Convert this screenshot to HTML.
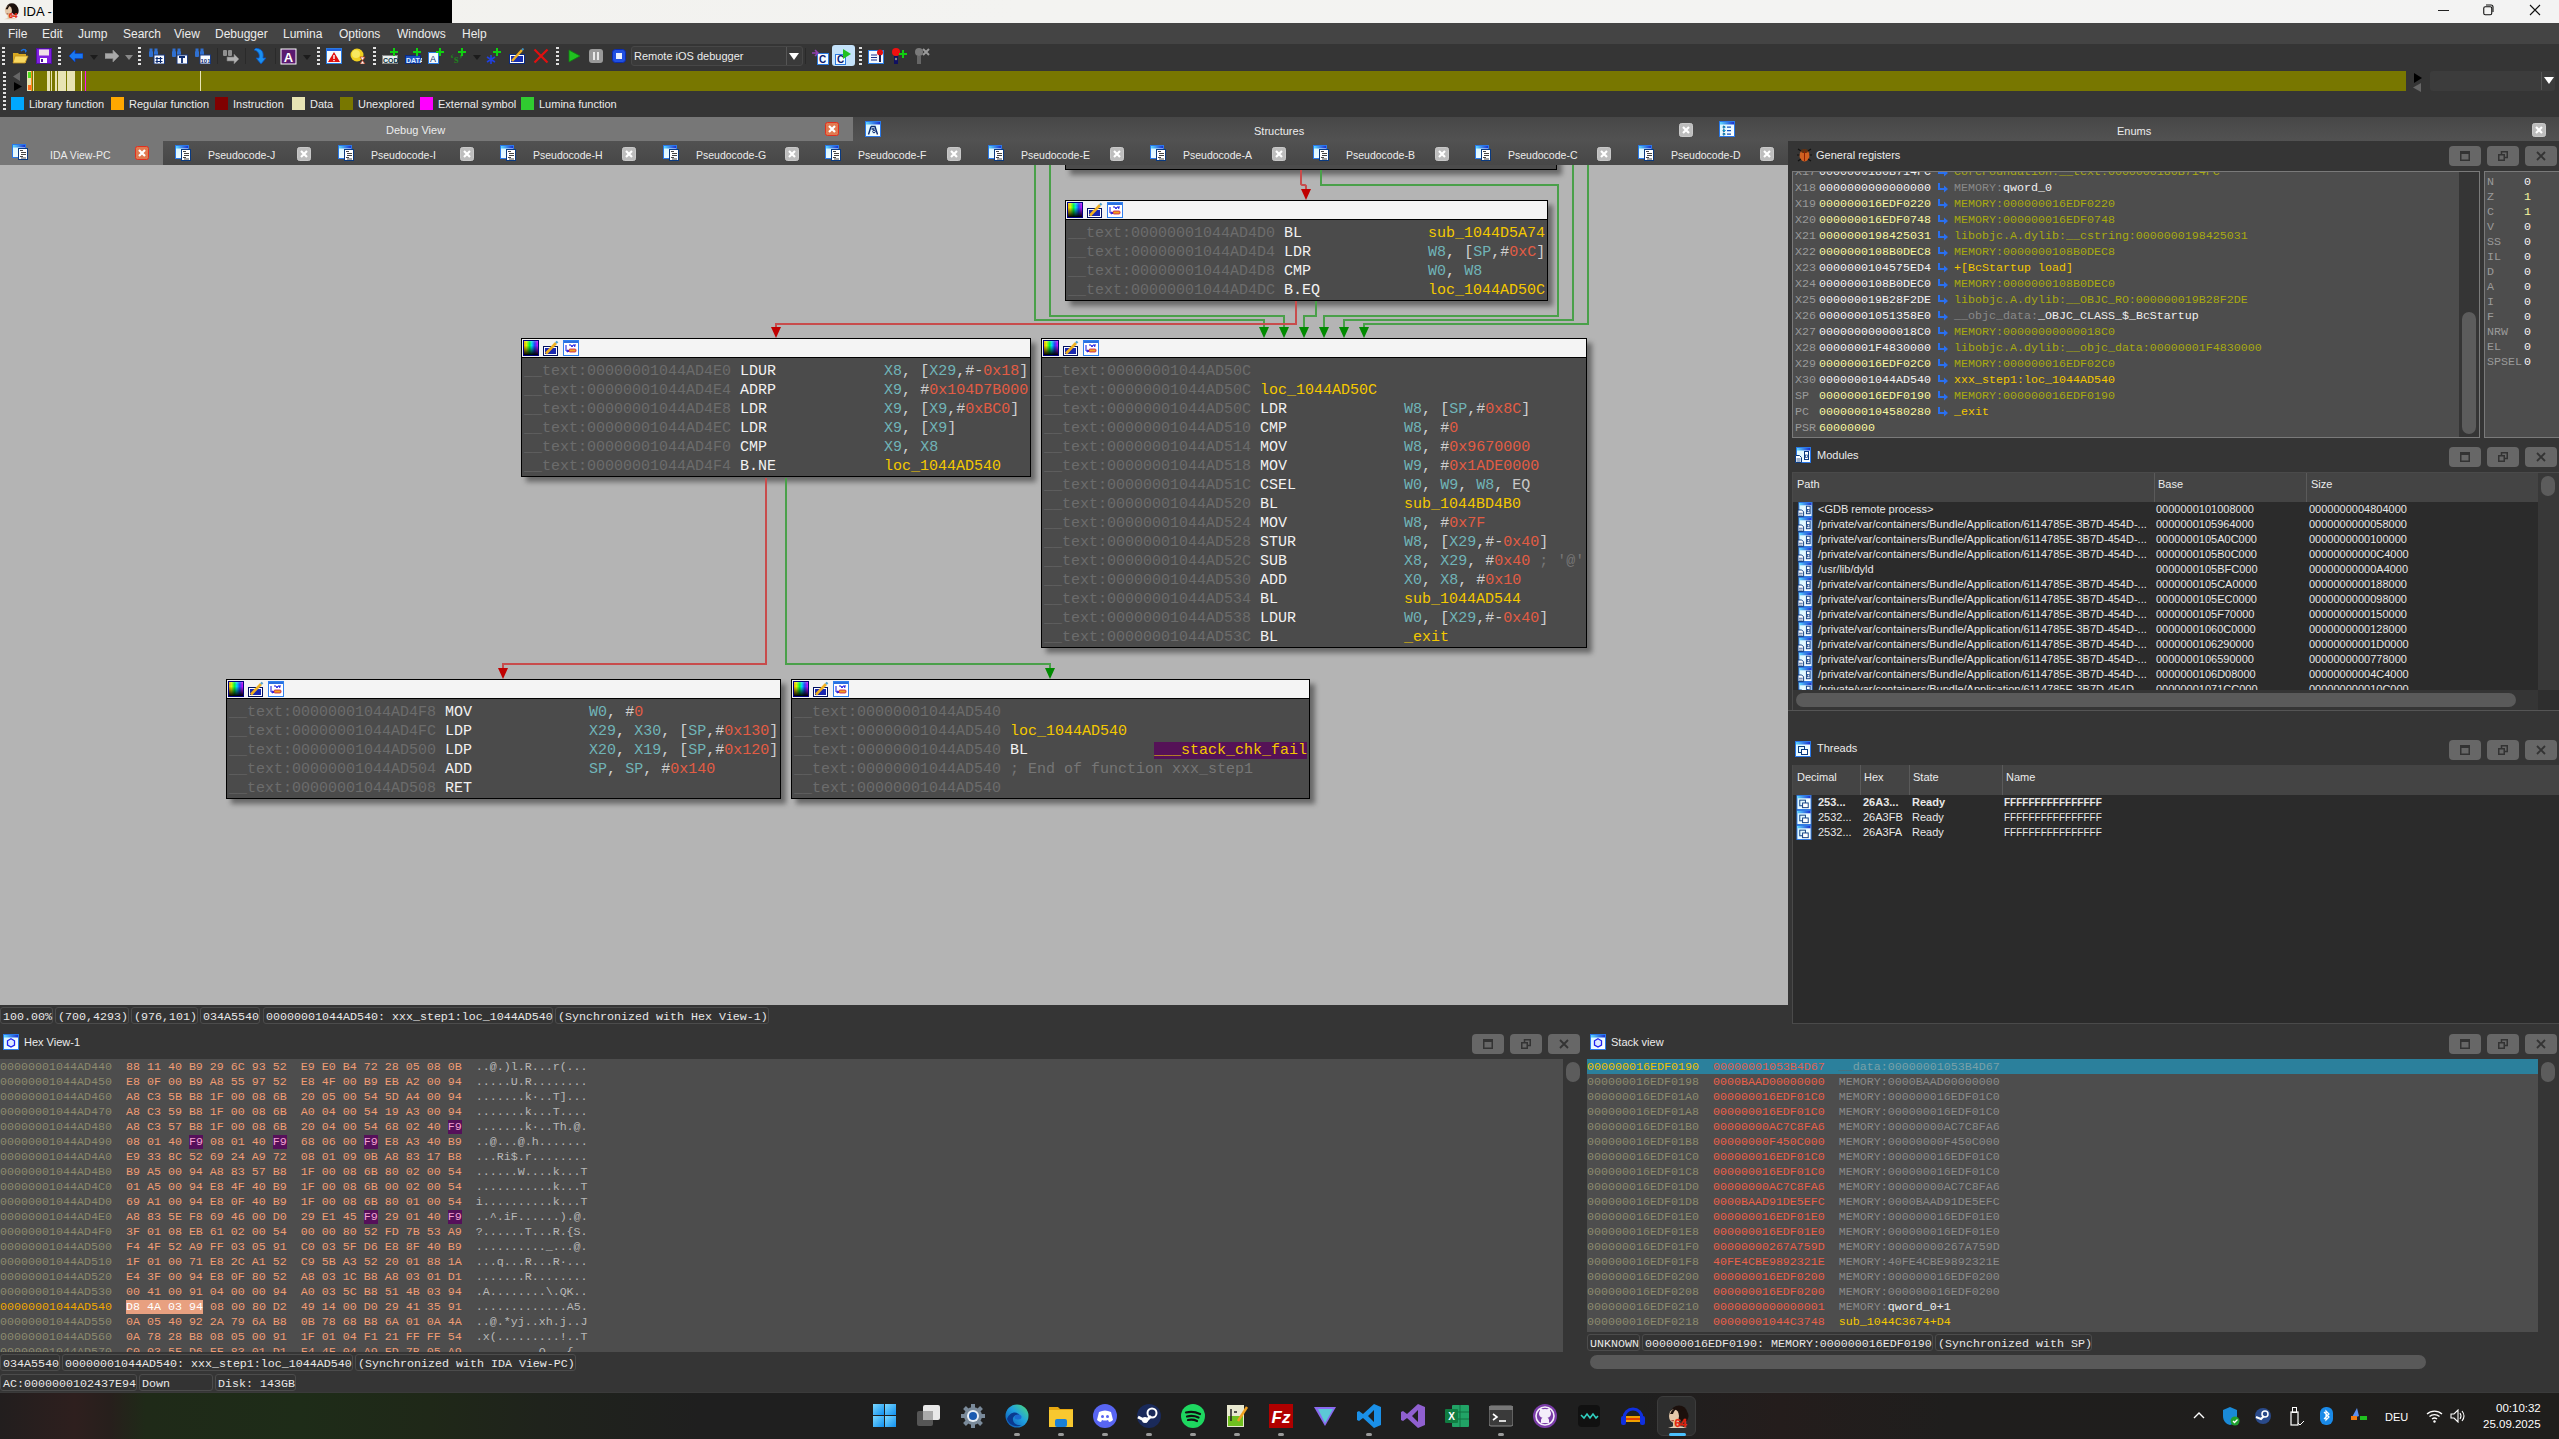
<!DOCTYPE html><html><head><meta charset="utf-8"><style>
html,body{margin:0;padding:0;width:2559px;height:1439px;overflow:hidden;background:#353535;}
body>div,body>svg{position:absolute;}
div{position:absolute;box-sizing:border-box;}
.t{white-space:pre;font-family:"Liberation Sans",sans-serif;font-size:11px;color:#e6e6e6;}
.m{white-space:pre;font-family:"Liberation Mono",monospace;}
</style></head><body>
<div style="left:0px;top:0px;width:2559px;height:23px;background:linear-gradient(90deg,#f2f1ed,#f3f3f1 40%,#f3f3f3)"></div>
<div style="left:53px;top:0px;width:399px;height:23px;background:#000"></div>
<svg style="position:absolute;left:2px;top:2px" width="17" height="18" viewBox="0 0 24 25"><ellipse cx="14" cy="8.5" rx="8" ry="7" fill="#1c100c"/><ellipse cx="19" cy="12" rx="4.5" ry="6" fill="#1c100c"/><path d="M3 24q9-4 19 0z" fill="#e6d2bc"/><rect x="8" y="16" width="6" height="7" fill="#dcc0a8"/><ellipse cx="9" cy="12" rx="5" ry="6.8" fill="#e4c8aa"/><path d="M5 10q2-6 8-6-4 2-5 6z" fill="#1c100c"/><path d="M6.5 16.5q1.5 0.8 2.5 0" stroke="#b04030" stroke-width="1"/><text x="9.5" y="23" font-family="Liberation Sans" font-size="11" font-weight="bold" fill="#e01a08" stroke="#f04020" stroke-width="0.3">64</text></svg>
<div class="t" style="left:23px;top:3px;font-size:13px;color:#000;line-height:17px">IDA -</div>
<div style="left:2438px;top:10px;width:11px;height:1px;background:#222"></div>
<svg style="position:absolute;left:2483px;top:4px" width="12" height="12"><rect x="0.75" y="2.75" width="8" height="8" rx="1.5" fill="none" stroke="#111" stroke-width="1.1"/><path d="M3 1h5q2 0 2 2v5" fill="none" stroke="#111" stroke-width="1.1"/></svg>
<svg style="position:absolute;left:2529px;top:4px" width="12" height="12"><path d="M1 1l10 10M11 1l-10 10" stroke="#111" stroke-width="1.1"/></svg>
<div style="left:0px;top:23px;width:2559px;height:21px;background:#444444"></div>
<div class="t" style="left:8px;top:27px;font-size:12px;line-height:15px;color:#ececec">File</div>
<div class="t" style="left:42px;top:27px;font-size:12px;line-height:15px;color:#ececec">Edit</div>
<div class="t" style="left:78px;top:27px;font-size:12px;line-height:15px;color:#ececec">Jump</div>
<div class="t" style="left:123px;top:27px;font-size:12px;line-height:15px;color:#ececec">Search</div>
<div class="t" style="left:174px;top:27px;font-size:12px;line-height:15px;color:#ececec">View</div>
<div class="t" style="left:215px;top:27px;font-size:12px;line-height:15px;color:#ececec">Debugger</div>
<div class="t" style="left:283px;top:27px;font-size:12px;line-height:15px;color:#ececec">Lumina</div>
<div class="t" style="left:339px;top:27px;font-size:12px;line-height:15px;color:#ececec">Options</div>
<div class="t" style="left:397px;top:27px;font-size:12px;line-height:15px;color:#ececec">Windows</div>
<div class="t" style="left:462px;top:27px;font-size:12px;line-height:15px;color:#ececec">Help</div>
<div style="left:0px;top:44px;width:2559px;height:26px;background:#353535"></div>
<svg style="position:absolute;left:2px;top:47px" width="3" height="20" viewBox="0 0 3 20"><rect x="0" y="0" width="3" height="2" fill="#e0e0e0"/><rect x="0" y="4" width="3" height="2" fill="#e0e0e0"/><rect x="0" y="8" width="3" height="2" fill="#e0e0e0"/><rect x="0" y="12" width="3" height="2" fill="#e0e0e0"/><rect x="0" y="16" width="3" height="2" fill="#e0e0e0"/></svg>
<svg style="position:absolute;left:12px;top:48px" width="17" height="16" viewBox="0 0 17 16"><path d="M1 5h5l1 1h7v9H1z" fill="#d8a820"/><path d="M3 8h13l-3 7H1z" fill="#f8d860" stroke="#c09020" stroke-width="0.8"/><path d="M9 3c2-2 4-2 5 0" stroke="#1a70e0" fill="none" stroke-width="1.5"/><path d="M13 1l2 2-2 2z" fill="#1a70e0"/></svg>
<svg style="position:absolute;left:36px;top:48px" width="16" height="16" viewBox="0 0 16 16"><rect x="0.5" y="0.5" width="15" height="15" fill="#8020e0" stroke="#5010a0"/><rect x="3" y="1.5" width="10" height="6" fill="#f0e0e8"/><rect x="4" y="10" width="7" height="5" fill="#fff"/><rect x="5" y="11" width="2" height="3" fill="#5010a0"/></svg>
<svg style="position:absolute;left:58px;top:47px" width="3" height="20" viewBox="0 0 3 20"><rect x="0" y="0" width="3" height="2" fill="#e0e0e0"/><rect x="0" y="4" width="3" height="2" fill="#e0e0e0"/><rect x="0" y="8" width="3" height="2" fill="#e0e0e0"/><rect x="0" y="12" width="3" height="2" fill="#e0e0e0"/><rect x="0" y="16" width="3" height="2" fill="#e0e0e0"/></svg>
<svg style="position:absolute;left:69px;top:50px" width="14" height="12" viewBox="0 0 14 12"><path d="M0 6l6-6v3.5h8v5H6V12z" fill="#1a78f0" stroke="#0a40c0" stroke-width="0.8"/></svg>
<svg style="position:absolute;left:90px;top:55px" width="8" height="5" viewBox="0 0 8 5"><path d="M0 0h8l-4 5z" fill="#1c1c1c"/></svg>
<svg style="position:absolute;left:105px;top:50px" width="14" height="12" viewBox="0 0 14 12"><path d="M14 6L8 0v3.5H0v5h8V12z" fill="#a8a8a8" stroke="#888" stroke-width="0.8"/></svg>
<svg style="position:absolute;left:125px;top:55px" width="8" height="5" viewBox="0 0 8 5"><path d="M0 0h8l-4 5z" fill="#888"/></svg>
<svg style="position:absolute;left:138px;top:47px" width="3" height="20" viewBox="0 0 3 20"><rect x="0" y="0" width="3" height="2" fill="#e0e0e0"/><rect x="0" y="4" width="3" height="2" fill="#e0e0e0"/><rect x="0" y="8" width="3" height="2" fill="#e0e0e0"/><rect x="0" y="12" width="3" height="2" fill="#e0e0e0"/><rect x="0" y="16" width="3" height="2" fill="#e0e0e0"/></svg>
<svg style="position:absolute;left:148px;top:48px" width="17" height="16" viewBox="0 0 17 16"><rect x="1" y="3" width="4" height="6" rx="1" fill="#3070d0"/><rect x="6" y="3" width="4" height="6" rx="1" fill="#3070d0"/><rect x="1.5" y="0.5" width="3" height="3" fill="#3070d0"/><rect x="6.5" y="0.5" width="3" height="3" fill="#3070d0"/><rect x="6" y="7" width="10.5" height="9" fill="#f8fbff" stroke="#1a3a80"/><path d="M9 9v6M12.5 9v6M7.5 10.5h7M7.5 13.5h7" stroke="#0a2a70" stroke-width="1.2"/></svg>
<svg style="position:absolute;left:171px;top:48px" width="17" height="16" viewBox="0 0 17 16"><rect x="1" y="3" width="4" height="6" rx="1" fill="#3070d0"/><rect x="6" y="3" width="4" height="6" rx="1" fill="#3070d0"/><rect x="1.5" y="0.5" width="3" height="3" fill="#3070d0"/><rect x="6.5" y="0.5" width="3" height="3" fill="#3070d0"/><rect x="6" y="7" width="10.5" height="9" fill="#f8fbff" stroke="#1a3a80"/><path d="M8 9h6M11 9v6" stroke="#0a2a70" stroke-width="1.8"/></svg>
<svg style="position:absolute;left:194px;top:48px" width="17" height="16" viewBox="0 0 17 16"><rect x="1" y="3" width="4" height="6" rx="1" fill="#3070d0"/><rect x="6" y="3" width="4" height="6" rx="1" fill="#3070d0"/><rect x="1.5" y="0.5" width="3" height="3" fill="#3070d0"/><rect x="6.5" y="0.5" width="3" height="3" fill="#3070d0"/><rect x="6" y="7" width="10.5" height="9" fill="#f8fbff" stroke="#1a3a80"/><text x="6.5" y="15" font-family="Liberation Sans" font-size="6" font-weight="bold" fill="#0a2a70">101</text></svg>
<div style="left:217px;top:48px;width:1px;height:16px;background:#2a2a2a"></div>
<svg style="position:absolute;left:222px;top:48px" width="17" height="16" viewBox="0 0 17 16"><rect x="1" y="2" width="4" height="6" rx="1" fill="#909090"/><rect x="6" y="2" width="4" height="6" rx="1" fill="#909090"/><path d="M5 9h7V6l5 5-5 5v-3H5z" fill="#b0b0b0" stroke="#777" stroke-width="0.6"/></svg>
<div style="left:245px;top:48px;width:1px;height:16px;background:#2a2a2a"></div>
<svg style="position:absolute;left:254px;top:48px" width="13" height="16" viewBox="0 0 13 16"><path d="M2 0c6 1 8 4 7 10h3l-5 6-5-6h3c1-4-1-7-5-8z" fill="#1a90f0" stroke="#0a50c0" stroke-width="0.8"/></svg>
<div style="left:275px;top:48px;width:1px;height:16px;background:#2a2a2a"></div>
<svg style="position:absolute;left:280px;top:48px" width="17" height="17" viewBox="0 0 17 17"><rect x="0.5" y="0.5" width="16" height="16" fill="#fff"/><rect x="1.5" y="1.5" width="14" height="14" fill="#5a1a70"/><text x="8.5" y="14" text-anchor="middle" font-family="Liberation Sans" font-size="13" font-weight="bold" fill="#fff">A</text></svg>
<svg style="position:absolute;left:303px;top:55px" width="8" height="5" viewBox="0 0 8 5"><path d="M0 0h8l-4 5z" fill="#1c1c1c"/></svg>
<svg style="position:absolute;left:317px;top:47px" width="3" height="20" viewBox="0 0 3 20"><rect x="0" y="0" width="3" height="2" fill="#e0e0e0"/><rect x="0" y="4" width="3" height="2" fill="#e0e0e0"/><rect x="0" y="8" width="3" height="2" fill="#e0e0e0"/><rect x="0" y="12" width="3" height="2" fill="#e0e0e0"/><rect x="0" y="16" width="3" height="2" fill="#e0e0e0"/></svg>
<svg style="position:absolute;left:326px;top:48px" width="16" height="16" viewBox="0 0 16 16"><rect x="0.5" y="0.5" width="15" height="15" fill="#f4fbff" stroke="#2a7ae0"/><rect x="1" y="1" width="14" height="2" fill="#2060e0"/><path d="M8 4l6 10H2z" fill="#e01010"/><rect x="7.3" y="7" width="1.4" height="4" fill="#fff"/><rect x="7.3" y="12" width="1.4" height="1.2" fill="#fff"/></svg>
<svg style="position:absolute;left:350px;top:48px" width="16" height="16" viewBox="0 0 16 16"><circle cx="7" cy="7" r="6.5" fill="#f0d020"/><circle cx="6" cy="6" r="4" fill="#f8e860"/><path d="M10 9h5l-5 7h5z" fill="#fff" stroke="#c04020" stroke-width="0.8"/></svg>
<svg style="position:absolute;left:373px;top:47px" width="3" height="20" viewBox="0 0 3 20"><rect x="0" y="0" width="3" height="2" fill="#e0e0e0"/><rect x="0" y="4" width="3" height="2" fill="#e0e0e0"/><rect x="0" y="8" width="3" height="2" fill="#e0e0e0"/><rect x="0" y="12" width="3" height="2" fill="#e0e0e0"/><rect x="0" y="16" width="3" height="2" fill="#e0e0e0"/></svg>
<svg style="position:absolute;left:382px;top:48px" width="17" height="16" viewBox="0 0 17 16"><rect x="0.5" y="7.5" width="15" height="8" fill="#e8f0f0" stroke="#888"/><text x="1" y="15" font-family="Liberation Sans" font-size="7" font-weight="bold" fill="#0a3040">CODE</text><path d="M8 4h8M12 0v8" stroke="#10d010" stroke-width="2"/></svg>
<svg style="position:absolute;left:405px;top:48px" width="17" height="16" viewBox="0 0 17 16"><rect x="0.5" y="7.5" width="15" height="8" fill="#1a50c0" stroke="#0a2a80"/><text x="1" y="15" font-family="Liberation Sans" font-size="7" font-weight="bold" fill="#e0f0ff">DATA</text><path d="M8 4h8M12 0v8" stroke="#10d010" stroke-width="2"/></svg>
<svg style="position:absolute;left:428px;top:48px" width="17" height="16" viewBox="0 0 17 16"><rect x="0.5" y="4.5" width="10" height="11" fill="#f4fbff" stroke="#2a7ae0"/><text x="2" y="14" font-family="Liberation Sans" font-size="9" fill="#0a2a70">A</text><path d="M8 4h8M12 0v8" stroke="#10d010" stroke-width="2"/></svg>
<svg style="position:absolute;left:450px;top:48px" width="17" height="16" viewBox="0 0 17 16"><text x="0" y="15" font-family="Liberation Serif" font-size="12" font-weight="bold" fill="#208020">‘s’</text><path d="M8 4h8M12 0v8" stroke="#10d010" stroke-width="2"/></svg>
<svg style="position:absolute;left:473px;top:55px" width="8" height="5" viewBox="0 0 8 5"><path d="M0 0h8l-4 5z" fill="#1c1c1c"/></svg>
<svg style="position:absolute;left:485px;top:48px" width="17" height="16" viewBox="0 0 17 16"><path d="M6 7v9M2 9l8 5M2 14l8-5" stroke="#2040e0" stroke-width="1.6"/><path d="M8 4h8M12 0v8" stroke="#10d010" stroke-width="2"/></svg>
<svg style="position:absolute;left:509px;top:48px" width="16" height="16" viewBox="0 0 16 16"><rect x="0.5" y="6.5" width="15" height="9" fill="#fff" stroke="#0a2a80"/><rect x="2" y="8" width="12" height="6" fill="#1a30b0"/><path d="M3 13l10-11" stroke="#f0b020" stroke-width="2.5"/><path d="M13 2l1.5-1.5" stroke="#4090c0" stroke-width="2"/></svg>
<svg style="position:absolute;left:533px;top:48px" width="16" height="16" viewBox="0 0 16 16"><path d="M1.5 1.5l13 13M14.5 1.5l-13 13" stroke="#e01010" stroke-width="2.2"/></svg>
<svg style="position:absolute;left:556px;top:47px" width="3" height="20" viewBox="0 0 3 20"><rect x="0" y="0" width="3" height="2" fill="#e0e0e0"/><rect x="0" y="4" width="3" height="2" fill="#e0e0e0"/><rect x="0" y="8" width="3" height="2" fill="#e0e0e0"/><rect x="0" y="12" width="3" height="2" fill="#e0e0e0"/><rect x="0" y="16" width="3" height="2" fill="#e0e0e0"/></svg>
<svg style="position:absolute;left:567px;top:49px" width="14" height="14" viewBox="0 0 14 14"><path d="M2 1l11 6-11 6z" fill="#20c020" stroke="#108010" stroke-width="0.8"/></svg>
<svg style="position:absolute;left:589px;top:49px" width="14" height="14" viewBox="0 0 14 14"><rect x="0" y="0" width="14" height="14" rx="3" fill="#9a9a9a"/><rect x="4" y="3" width="2" height="8" fill="#e8e8e8"/><rect x="8" y="3" width="2" height="8" fill="#e8e8e8"/></svg>
<svg style="position:absolute;left:612px;top:49px" width="14" height="14" viewBox="0 0 14 14"><rect x="0.5" y="0.5" width="13" height="13" rx="3" fill="#2050e0" stroke="#0a2ab0"/><rect x="4" y="4" width="6" height="6" fill="#e8f0ff"/></svg>
<div style="left:631px;top:46px;width:172px;height:20px;background:#3a3a3a;border:1px solid #474747;border-radius:3px"></div>
<div style="left:786px;top:47px;width:1px;height:18px;background:#555"></div>
<div class="t" style="left:634px;top:49px;font-size:11px;line-height:15px;color:#ececec">Remote iOS debugger</div>
<svg style="position:absolute;left:789px;top:53px" width="10" height="8" viewBox="0 0 10 8"><path d="M0 0h10l-5 7z" fill="#fff"/></svg>
<div style="left:805px;top:48px;width:1px;height:16px;background:#2a2a2a"></div>
<svg style="position:absolute;left:812px;top:48px" width="17" height="17" viewBox="0 0 17 17"><rect x="5.5" y="5.5" width="11" height="11" fill="#f4fbff" stroke="#2a7ae0"/><text x="7" y="15" font-family="Liberation Sans" font-size="10" font-weight="bold" fill="#0a1a70">C</text><path d="M0 5h5M3 2l3 3-3 3" stroke="#9040b0" stroke-width="1.6" fill="none"/></svg>
<div style="left:832px;top:45px;width:23px;height:21px;background:#c4e2fa;border-radius:3px"></div>
<svg style="position:absolute;left:835px;top:49px" width="18" height="16" viewBox="0 0 18 16"><rect x="0.5" y="5.5" width="10" height="10" fill="#f4fbff" stroke="#2a7ae0"/><text x="2" y="14" font-family="Liberation Sans" font-size="10" font-weight="bold" fill="#0a1a70">C</text><path d="M8 0l8 5-8 5z" fill="#20c020"/></svg>
<svg style="position:absolute;left:859px;top:47px" width="3" height="20" viewBox="0 0 3 20"><rect x="0" y="0" width="3" height="2" fill="#e0e0e0"/><rect x="0" y="4" width="3" height="2" fill="#e0e0e0"/><rect x="0" y="8" width="3" height="2" fill="#e0e0e0"/><rect x="0" y="12" width="3" height="2" fill="#e0e0e0"/><rect x="0" y="16" width="3" height="2" fill="#e0e0e0"/></svg>
<svg style="position:absolute;left:868px;top:48px" width="17" height="16" viewBox="0 0 17 16"><rect x="0.5" y="2.5" width="15" height="13" fill="#f4fbff" stroke="#2a7ae0"/><path d="M3 7h6M3 9.5h6M3 12h6" stroke="#1a3090"/><circle cx="12" cy="4.5" r="3" fill="#e01010"/><rect x="11" y="7" width="2" height="7" fill="#202050"/></svg>
<svg style="position:absolute;left:891px;top:48px" width="17" height="16" viewBox="0 0 17 16"><circle cx="5" cy="4" r="4" fill="#f01010"/><rect x="3" y="8" width="4" height="8" fill="#101060"/><circle cx="5" cy="11" r="1.2" fill="#888"/><path d="M8 6h8M12 2v8" stroke="#10d010" stroke-width="2"/></svg>
<svg style="position:absolute;left:914px;top:48px" width="17" height="16" viewBox="0 0 17 16"><circle cx="5" cy="4" r="4" fill="#7a7a7a"/><rect x="3" y="8" width="4" height="8" fill="#666"/><path d="M9 1l6 6M15 1l-6 6" stroke="#9a9a9a" stroke-width="2"/></svg>
<div style="left:0px;top:70px;width:2559px;height:47px;background:#353535"></div>
<svg style="position:absolute;left:3px;top:72px" width="3" height="40" viewBox="0 0 3 40"><rect x="0" y="0" width="3" height="2" fill="#e0e0e0"/><rect x="0" y="4" width="3" height="2" fill="#e0e0e0"/><rect x="0" y="8" width="3" height="2" fill="#e0e0e0"/><rect x="0" y="12" width="3" height="2" fill="#e0e0e0"/><rect x="0" y="16" width="3" height="2" fill="#e0e0e0"/><rect x="0" y="20" width="3" height="2" fill="#e0e0e0"/><rect x="0" y="24" width="3" height="2" fill="#e0e0e0"/><rect x="0" y="28" width="3" height="2" fill="#e0e0e0"/><rect x="0" y="32" width="3" height="2" fill="#e0e0e0"/><rect x="0" y="36" width="3" height="2" fill="#e0e0e0"/></svg>
<svg style="position:absolute;left:13px;top:72px" width="8" height="9" viewBox="0 0 8 9"><path d="M7 0v9L0 4.5z" fill="#666"/></svg>
<svg style="position:absolute;left:14px;top:82px" width="8" height="9" viewBox="0 0 8 9"><path d="M0 0v9l8-4.5z" fill="#000"/></svg>
<div style="left:27px;top:71px;width:2379px;height:20px;background:#787700"></div>
<div style="left:27px;top:71px;width:4px;height:20px;background:#e8e4b4"></div>
<div style="left:33px;top:71px;width:1px;height:20px;background:#e8e4b4"></div>
<div style="left:47px;top:71px;width:3px;height:20px;background:#e8e4b4"></div>
<div style="left:51px;top:71px;width:1px;height:20px;background:#e8e4b4"></div>
<div style="left:55px;top:71px;width:2px;height:20px;background:#e8e4b4"></div>
<div style="left:58px;top:71px;width:8px;height:20px;background:#e8e4b4"></div>
<div style="left:67px;top:71px;width:8px;height:20px;background:#e8e4b4"></div>
<div style="left:81px;top:71px;width:1px;height:20px;background:#e8e4b4"></div>
<div style="left:200px;top:71px;width:1px;height:20px;background:#e8e4b4"></div>
<div style="left:85px;top:71px;width:1px;height:20px;background:#ff10ff"></div>
<div style="left:28px;top:72px;width:3px;height:6px;background:#50e020"></div>
<div style="left:28px;top:85px;width:3px;height:5px;background:#ff7020"></div>
<div style="left:31px;top:71px;width:1px;height:20px;background:#ff9020"></div>
<svg style="position:absolute;left:2414px;top:73px" width="8" height="10" viewBox="0 0 8 10"><path d="M0 0v10l8-5z" fill="#000"/></svg>
<svg style="position:absolute;left:2413px;top:83px" width="8" height="9" viewBox="0 0 8 9"><path d="M8 0v9L0 4.5z" fill="#666"/></svg>
<div style="left:2430px;top:71px;width:125px;height:20px;background:#3c3c3c;border-radius:3px"></div>
<div style="left:2541px;top:72px;width:1px;height:18px;background:#555"></div>
<svg style="position:absolute;left:2544px;top:77px" width="10" height="8" viewBox="0 0 10 8"><path d="M0 0h10l-5 7z" fill="#fff"/></svg>
<div style="left:11px;top:97px;width:13px;height:13px;background:#00a8ff"></div>
<div class="t" style="left:29px;top:97px;font-size:11px;line-height:14px;color:#ececec">Library function</div>
<div style="left:111px;top:97px;width:13px;height:13px;background:#ffa800"></div>
<div class="t" style="left:129px;top:97px;font-size:11px;line-height:14px;color:#ececec">Regular function</div>
<div style="left:215px;top:97px;width:13px;height:13px;background:#800000"></div>
<div class="t" style="left:233px;top:97px;font-size:11px;line-height:14px;color:#ececec">Instruction</div>
<div style="left:292px;top:97px;width:13px;height:13px;background:#e8e4b4"></div>
<div class="t" style="left:310px;top:97px;font-size:11px;line-height:14px;color:#ececec">Data</div>
<div style="left:340px;top:97px;width:13px;height:13px;background:#787700"></div>
<div class="t" style="left:358px;top:97px;font-size:11px;line-height:14px;color:#ececec">Unexplored</div>
<div style="left:420px;top:97px;width:13px;height:13px;background:#ff00ff"></div>
<div class="t" style="left:438px;top:97px;font-size:11px;line-height:14px;color:#ececec">External symbol</div>
<div style="left:521px;top:97px;width:13px;height:13px;background:#30cc30"></div>
<div class="t" style="left:539px;top:97px;font-size:11px;line-height:14px;color:#ececec">Lumina function</div>
<div style="left:0px;top:117px;width:2559px;height:24px;background:linear-gradient(#474747,#525252)"></div>
<div style="left:0px;top:117px;width:853px;height:24px;background:#777777"></div>
<div class="t" style="left:386px;top:123px;font-size:11px;line-height:15px;color:#ececec">Debug View</div>
<svg style="position:absolute;left:825px;top:122px" width="14" height="14" viewBox="0 0 14 14"><rect x="0.5" y="0.5" width="13" height="13" rx="2" fill="#e07a50" stroke="#e03020"/><path d="M4 4l6 6M10 4l-6 6" stroke="#fff" stroke-width="2.2"/></svg>
<svg style="position:absolute;left:865px;top:121px" width="16" height="16" viewBox="0 0 16 16"><defs><linearGradient id="tb1" x1="0" x2="1"><stop offset="0" stop-color="#5ad8ff"/><stop offset="1" stop-color="#1a30d0"/></linearGradient><linearGradient id="bg1" x1="0" y1="0" x2="1" y2="1"><stop offset="0" stop-color="#d0f4ff"/><stop offset="1" stop-color="#ffffff"/></linearGradient></defs><rect x="0.5" y="0.5" width="15" height="15" fill="url(#bg1)" stroke="#2a78e8"/><rect x="1" y="1" width="14" height="2.5" fill="url(#tb1)"/><path d="M6 5.5h4l2.5 8M6 5.5l-2.5 8M6.5 8h3" fill="none" stroke="#0a2a70" stroke-width="1.4"/><circle cx="9" cy="10.5" r="1.3" fill="none" stroke="#0a2a70"/></svg>
<div class="t" style="left:1254px;top:124px;font-size:11px;line-height:15px;color:#ececec">Structures</div>
<svg style="position:absolute;left:1679px;top:123px" width="14" height="14" viewBox="0 0 14 14"><rect x="0.5" y="0.5" width="13" height="13" rx="2" fill="#bdbdbd" stroke="#c8c8c8"/><path d="M4 4l6 6M10 4l-6 6" stroke="#fff" stroke-width="2.2"/></svg>
<svg style="position:absolute;left:1719px;top:121px" width="16" height="16" viewBox="0 0 16 16"><defs><linearGradient id="tb2" x1="0" x2="1"><stop offset="0" stop-color="#5ad8ff"/><stop offset="1" stop-color="#1a30d0"/></linearGradient><linearGradient id="bg2" x1="0" y1="0" x2="1" y2="1"><stop offset="0" stop-color="#d0f4ff"/><stop offset="1" stop-color="#ffffff"/></linearGradient></defs><rect x="0.5" y="0.5" width="15" height="15" fill="url(#bg2)" stroke="#2a78e8"/><rect x="1" y="1" width="14" height="2.5" fill="url(#tb2)"/><path d="M5 4.8l1.3 1.3-1.3 1.3-1.3-1.3zM5 8.3l1.3 1.3-1.3 1.3-1.3-1.3zM5 11.8l1.3 1.3-1.3 1.3-1.3-1.3z" fill="#00c0f0" stroke="#002060" stroke-width="0.6"/><path d="M8 6.1h4M8 9.6h4M8 13.1h4" stroke="#1050c0" stroke-width="1.2"/></svg>
<div class="t" style="left:2117px;top:124px;font-size:11px;line-height:15px;color:#ececec">Enums</div>
<svg style="position:absolute;left:2532px;top:123px" width="14" height="14" viewBox="0 0 14 14"><rect x="0.5" y="0.5" width="13" height="13" rx="2" fill="#bdbdbd" stroke="#c8c8c8"/><path d="M4 4l6 6M10 4l-6 6" stroke="#fff" stroke-width="2.2"/></svg>
<div style="left:0px;top:141px;width:1788px;height:24px;background:linear-gradient(#515151,#474747)"></div>
<div style="left:0px;top:141px;width:163px;height:24px;background:#777777"></div>
<svg style="position:absolute;left:12px;top:144px" width="16" height="16" viewBox="0 0 16 16"><defs><linearGradient id="tb3" x1="0" x2="1"><stop offset="0" stop-color="#5ad8ff"/><stop offset="1" stop-color="#1a30d0"/></linearGradient><linearGradient id="bg3" x1="0" y1="0" x2="1" y2="1"><stop offset="0" stop-color="#d0f4ff"/><stop offset="1" stop-color="#ffffff"/></linearGradient></defs><rect x="0.5" y="0.5" width="13" height="13" fill="url(#bg3)" stroke="#2a78e8"/><rect x="1" y="1" width="12" height="2.5" fill="url(#tb3)"/><rect x="6.5" y="4.5" width="9" height="11" fill="#fff" stroke="#0a3a80"/><path d="M8 6.5h3M9 8.5h5M9 10.5h5M8 12.5h3M9 14h5" stroke="#303030" stroke-width="0.9"/></svg>
<div class="t" style="left:50px;top:148px;font-size:10.5px;line-height:15px;color:#ececec">IDA View-PC</div>
<svg style="position:absolute;left:135px;top:146px" width="14" height="14" viewBox="0 0 14 14"><rect x="0.5" y="0.5" width="13" height="13" rx="2" fill="#e07a50" stroke="#e03020"/><path d="M4 4l6 6M10 4l-6 6" stroke="#fff" stroke-width="2.2"/></svg>
<svg style="position:absolute;left:175px;top:145px" width="16" height="16" viewBox="0 0 16 16"><defs><linearGradient id="tb4" x1="0" x2="1"><stop offset="0" stop-color="#5ad8ff"/><stop offset="1" stop-color="#1a30d0"/></linearGradient><linearGradient id="bg4" x1="0" y1="0" x2="1" y2="1"><stop offset="0" stop-color="#d0f4ff"/><stop offset="1" stop-color="#ffffff"/></linearGradient></defs><rect x="0.5" y="0.5" width="13" height="13" fill="url(#bg4)" stroke="#2a78e8"/><rect x="1" y="1" width="12" height="2.5" fill="url(#tb4)"/><rect x="6.5" y="4.5" width="9" height="11" fill="#fff" stroke="#0a3a80"/><path d="M8 6.5h3M9 8.5h5M9 10.5h5M8 12.5h3M9 14h5" stroke="#303030" stroke-width="0.9"/></svg>
<div class="t" style="left:208px;top:148px;font-size:10.5px;line-height:15px;color:#ececec">Pseudocode-J</div>
<svg style="position:absolute;left:297px;top:147px" width="14" height="14" viewBox="0 0 14 14"><rect x="0.5" y="0.5" width="13" height="13" rx="2" fill="#bdbdbd" stroke="#c8c8c8"/><path d="M4 4l6 6M10 4l-6 6" stroke="#fff" stroke-width="2.2"/></svg>
<svg style="position:absolute;left:338px;top:145px" width="16" height="16" viewBox="0 0 16 16"><defs><linearGradient id="tb5" x1="0" x2="1"><stop offset="0" stop-color="#5ad8ff"/><stop offset="1" stop-color="#1a30d0"/></linearGradient><linearGradient id="bg5" x1="0" y1="0" x2="1" y2="1"><stop offset="0" stop-color="#d0f4ff"/><stop offset="1" stop-color="#ffffff"/></linearGradient></defs><rect x="0.5" y="0.5" width="13" height="13" fill="url(#bg5)" stroke="#2a78e8"/><rect x="1" y="1" width="12" height="2.5" fill="url(#tb5)"/><rect x="6.5" y="4.5" width="9" height="11" fill="#fff" stroke="#0a3a80"/><path d="M8 6.5h3M9 8.5h5M9 10.5h5M8 12.5h3M9 14h5" stroke="#303030" stroke-width="0.9"/></svg>
<div class="t" style="left:371px;top:148px;font-size:10.5px;line-height:15px;color:#ececec">Pseudocode-I</div>
<svg style="position:absolute;left:460px;top:147px" width="14" height="14" viewBox="0 0 14 14"><rect x="0.5" y="0.5" width="13" height="13" rx="2" fill="#bdbdbd" stroke="#c8c8c8"/><path d="M4 4l6 6M10 4l-6 6" stroke="#fff" stroke-width="2.2"/></svg>
<svg style="position:absolute;left:500px;top:145px" width="16" height="16" viewBox="0 0 16 16"><defs><linearGradient id="tb6" x1="0" x2="1"><stop offset="0" stop-color="#5ad8ff"/><stop offset="1" stop-color="#1a30d0"/></linearGradient><linearGradient id="bg6" x1="0" y1="0" x2="1" y2="1"><stop offset="0" stop-color="#d0f4ff"/><stop offset="1" stop-color="#ffffff"/></linearGradient></defs><rect x="0.5" y="0.5" width="13" height="13" fill="url(#bg6)" stroke="#2a78e8"/><rect x="1" y="1" width="12" height="2.5" fill="url(#tb6)"/><rect x="6.5" y="4.5" width="9" height="11" fill="#fff" stroke="#0a3a80"/><path d="M8 6.5h3M9 8.5h5M9 10.5h5M8 12.5h3M9 14h5" stroke="#303030" stroke-width="0.9"/></svg>
<div class="t" style="left:533px;top:148px;font-size:10.5px;line-height:15px;color:#ececec">Pseudocode-H</div>
<svg style="position:absolute;left:622px;top:147px" width="14" height="14" viewBox="0 0 14 14"><rect x="0.5" y="0.5" width="13" height="13" rx="2" fill="#bdbdbd" stroke="#c8c8c8"/><path d="M4 4l6 6M10 4l-6 6" stroke="#fff" stroke-width="2.2"/></svg>
<svg style="position:absolute;left:663px;top:145px" width="16" height="16" viewBox="0 0 16 16"><defs><linearGradient id="tb7" x1="0" x2="1"><stop offset="0" stop-color="#5ad8ff"/><stop offset="1" stop-color="#1a30d0"/></linearGradient><linearGradient id="bg7" x1="0" y1="0" x2="1" y2="1"><stop offset="0" stop-color="#d0f4ff"/><stop offset="1" stop-color="#ffffff"/></linearGradient></defs><rect x="0.5" y="0.5" width="13" height="13" fill="url(#bg7)" stroke="#2a78e8"/><rect x="1" y="1" width="12" height="2.5" fill="url(#tb7)"/><rect x="6.5" y="4.5" width="9" height="11" fill="#fff" stroke="#0a3a80"/><path d="M8 6.5h3M9 8.5h5M9 10.5h5M8 12.5h3M9 14h5" stroke="#303030" stroke-width="0.9"/></svg>
<div class="t" style="left:696px;top:148px;font-size:10.5px;line-height:15px;color:#ececec">Pseudocode-G</div>
<svg style="position:absolute;left:785px;top:147px" width="14" height="14" viewBox="0 0 14 14"><rect x="0.5" y="0.5" width="13" height="13" rx="2" fill="#bdbdbd" stroke="#c8c8c8"/><path d="M4 4l6 6M10 4l-6 6" stroke="#fff" stroke-width="2.2"/></svg>
<svg style="position:absolute;left:825px;top:145px" width="16" height="16" viewBox="0 0 16 16"><defs><linearGradient id="tb8" x1="0" x2="1"><stop offset="0" stop-color="#5ad8ff"/><stop offset="1" stop-color="#1a30d0"/></linearGradient><linearGradient id="bg8" x1="0" y1="0" x2="1" y2="1"><stop offset="0" stop-color="#d0f4ff"/><stop offset="1" stop-color="#ffffff"/></linearGradient></defs><rect x="0.5" y="0.5" width="13" height="13" fill="url(#bg8)" stroke="#2a78e8"/><rect x="1" y="1" width="12" height="2.5" fill="url(#tb8)"/><rect x="6.5" y="4.5" width="9" height="11" fill="#fff" stroke="#0a3a80"/><path d="M8 6.5h3M9 8.5h5M9 10.5h5M8 12.5h3M9 14h5" stroke="#303030" stroke-width="0.9"/></svg>
<div class="t" style="left:858px;top:148px;font-size:10.5px;line-height:15px;color:#ececec">Pseudocode-F</div>
<svg style="position:absolute;left:947px;top:147px" width="14" height="14" viewBox="0 0 14 14"><rect x="0.5" y="0.5" width="13" height="13" rx="2" fill="#bdbdbd" stroke="#c8c8c8"/><path d="M4 4l6 6M10 4l-6 6" stroke="#fff" stroke-width="2.2"/></svg>
<svg style="position:absolute;left:988px;top:145px" width="16" height="16" viewBox="0 0 16 16"><defs><linearGradient id="tb9" x1="0" x2="1"><stop offset="0" stop-color="#5ad8ff"/><stop offset="1" stop-color="#1a30d0"/></linearGradient><linearGradient id="bg9" x1="0" y1="0" x2="1" y2="1"><stop offset="0" stop-color="#d0f4ff"/><stop offset="1" stop-color="#ffffff"/></linearGradient></defs><rect x="0.5" y="0.5" width="13" height="13" fill="url(#bg9)" stroke="#2a78e8"/><rect x="1" y="1" width="12" height="2.5" fill="url(#tb9)"/><rect x="6.5" y="4.5" width="9" height="11" fill="#fff" stroke="#0a3a80"/><path d="M8 6.5h3M9 8.5h5M9 10.5h5M8 12.5h3M9 14h5" stroke="#303030" stroke-width="0.9"/></svg>
<div class="t" style="left:1021px;top:148px;font-size:10.5px;line-height:15px;color:#ececec">Pseudocode-E</div>
<svg style="position:absolute;left:1110px;top:147px" width="14" height="14" viewBox="0 0 14 14"><rect x="0.5" y="0.5" width="13" height="13" rx="2" fill="#bdbdbd" stroke="#c8c8c8"/><path d="M4 4l6 6M10 4l-6 6" stroke="#fff" stroke-width="2.2"/></svg>
<svg style="position:absolute;left:1150px;top:145px" width="16" height="16" viewBox="0 0 16 16"><defs><linearGradient id="tb10" x1="0" x2="1"><stop offset="0" stop-color="#5ad8ff"/><stop offset="1" stop-color="#1a30d0"/></linearGradient><linearGradient id="bg10" x1="0" y1="0" x2="1" y2="1"><stop offset="0" stop-color="#d0f4ff"/><stop offset="1" stop-color="#ffffff"/></linearGradient></defs><rect x="0.5" y="0.5" width="13" height="13" fill="url(#bg10)" stroke="#2a78e8"/><rect x="1" y="1" width="12" height="2.5" fill="url(#tb10)"/><rect x="6.5" y="4.5" width="9" height="11" fill="#fff" stroke="#0a3a80"/><path d="M8 6.5h3M9 8.5h5M9 10.5h5M8 12.5h3M9 14h5" stroke="#303030" stroke-width="0.9"/></svg>
<div class="t" style="left:1183px;top:148px;font-size:10.5px;line-height:15px;color:#ececec">Pseudocode-A</div>
<svg style="position:absolute;left:1272px;top:147px" width="14" height="14" viewBox="0 0 14 14"><rect x="0.5" y="0.5" width="13" height="13" rx="2" fill="#bdbdbd" stroke="#c8c8c8"/><path d="M4 4l6 6M10 4l-6 6" stroke="#fff" stroke-width="2.2"/></svg>
<svg style="position:absolute;left:1313px;top:145px" width="16" height="16" viewBox="0 0 16 16"><defs><linearGradient id="tb11" x1="0" x2="1"><stop offset="0" stop-color="#5ad8ff"/><stop offset="1" stop-color="#1a30d0"/></linearGradient><linearGradient id="bg11" x1="0" y1="0" x2="1" y2="1"><stop offset="0" stop-color="#d0f4ff"/><stop offset="1" stop-color="#ffffff"/></linearGradient></defs><rect x="0.5" y="0.5" width="13" height="13" fill="url(#bg11)" stroke="#2a78e8"/><rect x="1" y="1" width="12" height="2.5" fill="url(#tb11)"/><rect x="6.5" y="4.5" width="9" height="11" fill="#fff" stroke="#0a3a80"/><path d="M8 6.5h3M9 8.5h5M9 10.5h5M8 12.5h3M9 14h5" stroke="#303030" stroke-width="0.9"/></svg>
<div class="t" style="left:1346px;top:148px;font-size:10.5px;line-height:15px;color:#ececec">Pseudocode-B</div>
<svg style="position:absolute;left:1435px;top:147px" width="14" height="14" viewBox="0 0 14 14"><rect x="0.5" y="0.5" width="13" height="13" rx="2" fill="#bdbdbd" stroke="#c8c8c8"/><path d="M4 4l6 6M10 4l-6 6" stroke="#fff" stroke-width="2.2"/></svg>
<svg style="position:absolute;left:1475px;top:145px" width="16" height="16" viewBox="0 0 16 16"><defs><linearGradient id="tb12" x1="0" x2="1"><stop offset="0" stop-color="#5ad8ff"/><stop offset="1" stop-color="#1a30d0"/></linearGradient><linearGradient id="bg12" x1="0" y1="0" x2="1" y2="1"><stop offset="0" stop-color="#d0f4ff"/><stop offset="1" stop-color="#ffffff"/></linearGradient></defs><rect x="0.5" y="0.5" width="13" height="13" fill="url(#bg12)" stroke="#2a78e8"/><rect x="1" y="1" width="12" height="2.5" fill="url(#tb12)"/><rect x="6.5" y="4.5" width="9" height="11" fill="#fff" stroke="#0a3a80"/><path d="M8 6.5h3M9 8.5h5M9 10.5h5M8 12.5h3M9 14h5" stroke="#303030" stroke-width="0.9"/></svg>
<div class="t" style="left:1508px;top:148px;font-size:10.5px;line-height:15px;color:#ececec">Pseudocode-C</div>
<svg style="position:absolute;left:1597px;top:147px" width="14" height="14" viewBox="0 0 14 14"><rect x="0.5" y="0.5" width="13" height="13" rx="2" fill="#bdbdbd" stroke="#c8c8c8"/><path d="M4 4l6 6M10 4l-6 6" stroke="#fff" stroke-width="2.2"/></svg>
<svg style="position:absolute;left:1638px;top:145px" width="16" height="16" viewBox="0 0 16 16"><defs><linearGradient id="tb13" x1="0" x2="1"><stop offset="0" stop-color="#5ad8ff"/><stop offset="1" stop-color="#1a30d0"/></linearGradient><linearGradient id="bg13" x1="0" y1="0" x2="1" y2="1"><stop offset="0" stop-color="#d0f4ff"/><stop offset="1" stop-color="#ffffff"/></linearGradient></defs><rect x="0.5" y="0.5" width="13" height="13" fill="url(#bg13)" stroke="#2a78e8"/><rect x="1" y="1" width="12" height="2.5" fill="url(#tb13)"/><rect x="6.5" y="4.5" width="9" height="11" fill="#fff" stroke="#0a3a80"/><path d="M8 6.5h3M9 8.5h5M9 10.5h5M8 12.5h3M9 14h5" stroke="#303030" stroke-width="0.9"/></svg>
<div class="t" style="left:1671px;top:148px;font-size:10.5px;line-height:15px;color:#ececec">Pseudocode-D</div>
<svg style="position:absolute;left:1760px;top:147px" width="14" height="14" viewBox="0 0 14 14"><rect x="0.5" y="0.5" width="13" height="13" rx="2" fill="#bdbdbd" stroke="#c8c8c8"/><path d="M4 4l6 6M10 4l-6 6" stroke="#fff" stroke-width="2.2"/></svg>
<div style="left:0px;top:165px;width:1788px;height:840px;background:#b4b4b4;overflow:hidden">
<div style="left:1065px;top:-40px;width:492px;height:45px;border:1px solid #000;background:#4b4b4b;box-shadow:5px 5px 5px rgba(0,0,0,0.42)"></div>
<div style="left:1065px;top:35px;width:483px;height:101px;border:1px solid #000;background:#4b4b4b;box-shadow:5px 5px 5px rgba(0,0,0,0.42)">
<div style="left:0;top:0;width:100%;height:18px;background:#f4f4f4;border-bottom:1px solid #000;box-sizing:content-box"></div>
<svg style="position:absolute;left:1px;top:1px" width="56" height="17" viewBox="0 0 56 17"><defs><linearGradient id="hg" x1="0" x2="1"><stop offset="0" stop-color="#ffa000"/><stop offset="0.2" stop-color="#e0ff00"/><stop offset="0.4" stop-color="#00ff40"/><stop offset="0.55" stop-color="#00e0ff"/><stop offset="0.75" stop-color="#2040ff"/><stop offset="1" stop-color="#ff00ff"/></linearGradient><linearGradient id="vg" x1="0" y1="0" x2="0" y2="1"><stop offset="0" stop-color="#fff" stop-opacity="0.25"/><stop offset="0.3" stop-color="#000" stop-opacity="0"/><stop offset="1" stop-color="#000" stop-opacity="1"/></linearGradient></defs><rect x="0.5" y="0.5" width="15" height="15" fill="url(#hg)" stroke="#000080"/><rect x="1" y="1" width="14" height="14" fill="url(#vg)"/><rect x="20.5" y="6.5" width="14" height="9" fill="#fff" stroke="#001060"/><rect x="22" y="8" width="11" height="6" fill="#1a28b0"/><path d="M23 13.5L33 3" stroke="#f0b020" stroke-width="2.6"/><path d="M33 3l1.5-1.5" stroke="#50a0d0" stroke-width="2.4"/><rect x="40.5" y="0.5" width="15" height="15" fill="#fff" stroke="#3080f0"/><rect x="41" y="1" width="14" height="2" fill="#2a70e0"/><path d="M43 5v6h3M44 10l2 1-2 1M46 5h2M50 5h3M48 5l1 2 1-2M51 5l1 2" stroke="#1010e0" fill="none" stroke-width="1"/><rect x="46" y="9" width="7" height="3" rx="1" fill="#f0a020" stroke="#c01050" stroke-width="0.8"/></svg>
<div class="m" style="left:2px;top:23px;font-size:15px;line-height:19px"><span style="color:#6c6c6c">__text:00000001044AD4D0</span> <span style="color:#f2f2f2">BL              </span><span style="color:#f4c800">sub_1044D5A74</span><br><span style="color:#6c6c6c">__text:00000001044AD4D4</span> <span style="color:#f2f2f2">LDR             </span><span style="color:#70b4b8">W8</span><span style="color:#d0d0d0">,</span><span style="color:#d0d0d0"> </span><span style="color:#d0d0d0">[</span><span style="color:#70b4b8">SP</span><span style="color:#d0d0d0">,</span><span style="color:#d0d0d0">#</span><span style="color:#e25c44">0xC</span><span style="color:#d0d0d0">]</span><br><span style="color:#6c6c6c">__text:00000001044AD4D8</span> <span style="color:#f2f2f2">CMP             </span><span style="color:#70b4b8">W0</span><span style="color:#d0d0d0">,</span><span style="color:#d0d0d0"> </span><span style="color:#70b4b8">W8</span><br><span style="color:#6c6c6c">__text:00000001044AD4DC</span> <span style="color:#f2f2f2">B.EQ            </span><span style="color:#f4c800">loc_1044AD50C</span></div></div>
<div style="left:521px;top:173px;width:510px;height:139px;border:1px solid #000;background:#4b4b4b;box-shadow:5px 5px 5px rgba(0,0,0,0.42)">
<div style="left:0;top:0;width:100%;height:18px;background:#f4f4f4;border-bottom:1px solid #000;box-sizing:content-box"></div>
<svg style="position:absolute;left:1px;top:1px" width="56" height="17" viewBox="0 0 56 17"><defs><linearGradient id="hg" x1="0" x2="1"><stop offset="0" stop-color="#ffa000"/><stop offset="0.2" stop-color="#e0ff00"/><stop offset="0.4" stop-color="#00ff40"/><stop offset="0.55" stop-color="#00e0ff"/><stop offset="0.75" stop-color="#2040ff"/><stop offset="1" stop-color="#ff00ff"/></linearGradient><linearGradient id="vg" x1="0" y1="0" x2="0" y2="1"><stop offset="0" stop-color="#fff" stop-opacity="0.25"/><stop offset="0.3" stop-color="#000" stop-opacity="0"/><stop offset="1" stop-color="#000" stop-opacity="1"/></linearGradient></defs><rect x="0.5" y="0.5" width="15" height="15" fill="url(#hg)" stroke="#000080"/><rect x="1" y="1" width="14" height="14" fill="url(#vg)"/><rect x="20.5" y="6.5" width="14" height="9" fill="#fff" stroke="#001060"/><rect x="22" y="8" width="11" height="6" fill="#1a28b0"/><path d="M23 13.5L33 3" stroke="#f0b020" stroke-width="2.6"/><path d="M33 3l1.5-1.5" stroke="#50a0d0" stroke-width="2.4"/><rect x="40.5" y="0.5" width="15" height="15" fill="#fff" stroke="#3080f0"/><rect x="41" y="1" width="14" height="2" fill="#2a70e0"/><path d="M43 5v6h3M44 10l2 1-2 1M46 5h2M50 5h3M48 5l1 2 1-2M51 5l1 2" stroke="#1010e0" fill="none" stroke-width="1"/><rect x="46" y="9" width="7" height="3" rx="1" fill="#f0a020" stroke="#c01050" stroke-width="0.8"/></svg>
<div class="m" style="left:2px;top:23px;font-size:15px;line-height:19px"><span style="color:#6c6c6c">__text:00000001044AD4E0</span> <span style="color:#f2f2f2">LDUR            </span><span style="color:#70b4b8">X8</span><span style="color:#d0d0d0">,</span><span style="color:#d0d0d0"> </span><span style="color:#d0d0d0">[</span><span style="color:#70b4b8">X29</span><span style="color:#d0d0d0">,</span><span style="color:#d0d0d0">#</span><span style="color:#d0d0d0">-</span><span style="color:#e25c44">0x18</span><span style="color:#d0d0d0">]</span><br><span style="color:#6c6c6c">__text:00000001044AD4E4</span> <span style="color:#f2f2f2">ADRP            </span><span style="color:#70b4b8">X9</span><span style="color:#d0d0d0">,</span><span style="color:#d0d0d0"> </span><span style="color:#d0d0d0">#</span><span style="color:#e25c44">0x104D7B000</span><br><span style="color:#6c6c6c">__text:00000001044AD4E8</span> <span style="color:#f2f2f2">LDR             </span><span style="color:#70b4b8">X9</span><span style="color:#d0d0d0">,</span><span style="color:#d0d0d0"> </span><span style="color:#d0d0d0">[</span><span style="color:#70b4b8">X9</span><span style="color:#d0d0d0">,</span><span style="color:#d0d0d0">#</span><span style="color:#e25c44">0xBC0</span><span style="color:#d0d0d0">]</span><br><span style="color:#6c6c6c">__text:00000001044AD4EC</span> <span style="color:#f2f2f2">LDR             </span><span style="color:#70b4b8">X9</span><span style="color:#d0d0d0">,</span><span style="color:#d0d0d0"> </span><span style="color:#d0d0d0">[</span><span style="color:#70b4b8">X9</span><span style="color:#d0d0d0">]</span><br><span style="color:#6c6c6c">__text:00000001044AD4F0</span> <span style="color:#f2f2f2">CMP             </span><span style="color:#70b4b8">X9</span><span style="color:#d0d0d0">,</span><span style="color:#d0d0d0"> </span><span style="color:#70b4b8">X8</span><br><span style="color:#6c6c6c">__text:00000001044AD4F4</span> <span style="color:#f2f2f2">B.NE            </span><span style="color:#f4c800">loc_1044AD540</span></div></div>
<div style="left:1041px;top:173px;width:546px;height:310px;border:1px solid #000;background:#4b4b4b;box-shadow:5px 5px 5px rgba(0,0,0,0.42)">
<div style="left:0;top:0;width:100%;height:18px;background:#f4f4f4;border-bottom:1px solid #000;box-sizing:content-box"></div>
<svg style="position:absolute;left:1px;top:1px" width="56" height="17" viewBox="0 0 56 17"><defs><linearGradient id="hg" x1="0" x2="1"><stop offset="0" stop-color="#ffa000"/><stop offset="0.2" stop-color="#e0ff00"/><stop offset="0.4" stop-color="#00ff40"/><stop offset="0.55" stop-color="#00e0ff"/><stop offset="0.75" stop-color="#2040ff"/><stop offset="1" stop-color="#ff00ff"/></linearGradient><linearGradient id="vg" x1="0" y1="0" x2="0" y2="1"><stop offset="0" stop-color="#fff" stop-opacity="0.25"/><stop offset="0.3" stop-color="#000" stop-opacity="0"/><stop offset="1" stop-color="#000" stop-opacity="1"/></linearGradient></defs><rect x="0.5" y="0.5" width="15" height="15" fill="url(#hg)" stroke="#000080"/><rect x="1" y="1" width="14" height="14" fill="url(#vg)"/><rect x="20.5" y="6.5" width="14" height="9" fill="#fff" stroke="#001060"/><rect x="22" y="8" width="11" height="6" fill="#1a28b0"/><path d="M23 13.5L33 3" stroke="#f0b020" stroke-width="2.6"/><path d="M33 3l1.5-1.5" stroke="#50a0d0" stroke-width="2.4"/><rect x="40.5" y="0.5" width="15" height="15" fill="#fff" stroke="#3080f0"/><rect x="41" y="1" width="14" height="2" fill="#2a70e0"/><path d="M43 5v6h3M44 10l2 1-2 1M46 5h2M50 5h3M48 5l1 2 1-2M51 5l1 2" stroke="#1010e0" fill="none" stroke-width="1"/><rect x="46" y="9" width="7" height="3" rx="1" fill="#f0a020" stroke="#c01050" stroke-width="0.8"/></svg>
<div class="m" style="left:2px;top:23px;font-size:15px;line-height:19px"><span style="color:#6c6c6c">__text:00000001044AD50C</span><br><span style="color:#6c6c6c">__text:00000001044AD50C</span> <span style="color:#f4c800">loc_1044AD50C</span><br><span style="color:#6c6c6c">__text:00000001044AD50C</span> <span style="color:#f2f2f2">LDR             </span><span style="color:#70b4b8">W8</span><span style="color:#d0d0d0">,</span><span style="color:#d0d0d0"> </span><span style="color:#d0d0d0">[</span><span style="color:#70b4b8">SP</span><span style="color:#d0d0d0">,</span><span style="color:#d0d0d0">#</span><span style="color:#e25c44">0x8C</span><span style="color:#d0d0d0">]</span><br><span style="color:#6c6c6c">__text:00000001044AD510</span> <span style="color:#f2f2f2">CMP             </span><span style="color:#70b4b8">W8</span><span style="color:#d0d0d0">,</span><span style="color:#d0d0d0"> </span><span style="color:#d0d0d0">#</span><span style="color:#e25c44">0</span><br><span style="color:#6c6c6c">__text:00000001044AD514</span> <span style="color:#f2f2f2">MOV             </span><span style="color:#70b4b8">W8</span><span style="color:#d0d0d0">,</span><span style="color:#d0d0d0"> </span><span style="color:#d0d0d0">#</span><span style="color:#e25c44">0x9670000</span><br><span style="color:#6c6c6c">__text:00000001044AD518</span> <span style="color:#f2f2f2">MOV             </span><span style="color:#70b4b8">W9</span><span style="color:#d0d0d0">,</span><span style="color:#d0d0d0"> </span><span style="color:#d0d0d0">#</span><span style="color:#e25c44">0x1ADE0000</span><br><span style="color:#6c6c6c">__text:00000001044AD51C</span> <span style="color:#f2f2f2">CSEL            </span><span style="color:#70b4b8">W0</span><span style="color:#d0d0d0">,</span><span style="color:#d0d0d0"> </span><span style="color:#70b4b8">W9</span><span style="color:#d0d0d0">,</span><span style="color:#d0d0d0"> </span><span style="color:#70b4b8">W8</span><span style="color:#d0d0d0">,</span><span style="color:#d0d0d0"> </span><span style="color:#c8c8c8">EQ</span><br><span style="color:#6c6c6c">__text:00000001044AD520</span> <span style="color:#f2f2f2">BL              </span><span style="color:#f4c800">sub_1044BD4B0</span><br><span style="color:#6c6c6c">__text:00000001044AD524</span> <span style="color:#f2f2f2">MOV             </span><span style="color:#70b4b8">W8</span><span style="color:#d0d0d0">,</span><span style="color:#d0d0d0"> </span><span style="color:#d0d0d0">#</span><span style="color:#e25c44">0x7F</span><br><span style="color:#6c6c6c">__text:00000001044AD528</span> <span style="color:#f2f2f2">STUR            </span><span style="color:#70b4b8">W8</span><span style="color:#d0d0d0">,</span><span style="color:#d0d0d0"> </span><span style="color:#d0d0d0">[</span><span style="color:#70b4b8">X29</span><span style="color:#d0d0d0">,</span><span style="color:#d0d0d0">#</span><span style="color:#d0d0d0">-</span><span style="color:#e25c44">0x40</span><span style="color:#d0d0d0">]</span><br><span style="color:#6c6c6c">__text:00000001044AD52C</span> <span style="color:#f2f2f2">SUB             </span><span style="color:#70b4b8">X8</span><span style="color:#d0d0d0">,</span><span style="color:#d0d0d0"> </span><span style="color:#70b4b8">X29</span><span style="color:#d0d0d0">,</span><span style="color:#d0d0d0"> </span><span style="color:#d0d0d0">#</span><span style="color:#e25c44">0x40</span><span style="color:#767676"> ; '@'</span><br><span style="color:#6c6c6c">__text:00000001044AD530</span> <span style="color:#f2f2f2">ADD             </span><span style="color:#70b4b8">X0</span><span style="color:#d0d0d0">,</span><span style="color:#d0d0d0"> </span><span style="color:#70b4b8">X8</span><span style="color:#d0d0d0">,</span><span style="color:#d0d0d0"> </span><span style="color:#d0d0d0">#</span><span style="color:#e25c44">0x10</span><br><span style="color:#6c6c6c">__text:00000001044AD534</span> <span style="color:#f2f2f2">BL              </span><span style="color:#f4c800">sub_1044AD544</span><br><span style="color:#6c6c6c">__text:00000001044AD538</span> <span style="color:#f2f2f2">LDUR            </span><span style="color:#70b4b8">W0</span><span style="color:#d0d0d0">,</span><span style="color:#d0d0d0"> </span><span style="color:#d0d0d0">[</span><span style="color:#70b4b8">X29</span><span style="color:#d0d0d0">,</span><span style="color:#d0d0d0">#</span><span style="color:#d0d0d0">-</span><span style="color:#e25c44">0x40</span><span style="color:#d0d0d0">]</span><br><span style="color:#6c6c6c">__text:00000001044AD53C</span> <span style="color:#f2f2f2">BL              </span><span style="color:#f4c800">_exit</span></div></div>
<div style="left:226px;top:514px;width:555px;height:120px;border:1px solid #000;background:#4b4b4b;box-shadow:5px 5px 5px rgba(0,0,0,0.42)">
<div style="left:0;top:0;width:100%;height:18px;background:#f4f4f4;border-bottom:1px solid #000;box-sizing:content-box"></div>
<svg style="position:absolute;left:1px;top:1px" width="56" height="17" viewBox="0 0 56 17"><defs><linearGradient id="hg" x1="0" x2="1"><stop offset="0" stop-color="#ffa000"/><stop offset="0.2" stop-color="#e0ff00"/><stop offset="0.4" stop-color="#00ff40"/><stop offset="0.55" stop-color="#00e0ff"/><stop offset="0.75" stop-color="#2040ff"/><stop offset="1" stop-color="#ff00ff"/></linearGradient><linearGradient id="vg" x1="0" y1="0" x2="0" y2="1"><stop offset="0" stop-color="#fff" stop-opacity="0.25"/><stop offset="0.3" stop-color="#000" stop-opacity="0"/><stop offset="1" stop-color="#000" stop-opacity="1"/></linearGradient></defs><rect x="0.5" y="0.5" width="15" height="15" fill="url(#hg)" stroke="#000080"/><rect x="1" y="1" width="14" height="14" fill="url(#vg)"/><rect x="20.5" y="6.5" width="14" height="9" fill="#fff" stroke="#001060"/><rect x="22" y="8" width="11" height="6" fill="#1a28b0"/><path d="M23 13.5L33 3" stroke="#f0b020" stroke-width="2.6"/><path d="M33 3l1.5-1.5" stroke="#50a0d0" stroke-width="2.4"/><rect x="40.5" y="0.5" width="15" height="15" fill="#fff" stroke="#3080f0"/><rect x="41" y="1" width="14" height="2" fill="#2a70e0"/><path d="M43 5v6h3M44 10l2 1-2 1M46 5h2M50 5h3M48 5l1 2 1-2M51 5l1 2" stroke="#1010e0" fill="none" stroke-width="1"/><rect x="46" y="9" width="7" height="3" rx="1" fill="#f0a020" stroke="#c01050" stroke-width="0.8"/></svg>
<div class="m" style="left:2px;top:23px;font-size:15px;line-height:19px"><span style="color:#6c6c6c">__text:00000001044AD4F8</span> <span style="color:#f2f2f2">MOV             </span><span style="color:#70b4b8">W0</span><span style="color:#d0d0d0">,</span><span style="color:#d0d0d0"> </span><span style="color:#d0d0d0">#</span><span style="color:#e25c44">0</span><br><span style="color:#6c6c6c">__text:00000001044AD4FC</span> <span style="color:#f2f2f2">LDP             </span><span style="color:#70b4b8">X29</span><span style="color:#d0d0d0">,</span><span style="color:#d0d0d0"> </span><span style="color:#70b4b8">X30</span><span style="color:#d0d0d0">,</span><span style="color:#d0d0d0"> </span><span style="color:#d0d0d0">[</span><span style="color:#70b4b8">SP</span><span style="color:#d0d0d0">,</span><span style="color:#d0d0d0">#</span><span style="color:#e25c44">0x130</span><span style="color:#d0d0d0">]</span><br><span style="color:#6c6c6c">__text:00000001044AD500</span> <span style="color:#f2f2f2">LDP             </span><span style="color:#70b4b8">X20</span><span style="color:#d0d0d0">,</span><span style="color:#d0d0d0"> </span><span style="color:#70b4b8">X19</span><span style="color:#d0d0d0">,</span><span style="color:#d0d0d0"> </span><span style="color:#d0d0d0">[</span><span style="color:#70b4b8">SP</span><span style="color:#d0d0d0">,</span><span style="color:#d0d0d0">#</span><span style="color:#e25c44">0x120</span><span style="color:#d0d0d0">]</span><br><span style="color:#6c6c6c">__text:00000001044AD504</span> <span style="color:#f2f2f2">ADD             </span><span style="color:#70b4b8">SP</span><span style="color:#d0d0d0">,</span><span style="color:#d0d0d0"> </span><span style="color:#70b4b8">SP</span><span style="color:#d0d0d0">,</span><span style="color:#d0d0d0"> </span><span style="color:#d0d0d0">#</span><span style="color:#e25c44">0x140</span><br><span style="color:#6c6c6c">__text:00000001044AD508</span> <span style="color:#f2f2f2">RET             </span></div></div>
<div style="left:791px;top:514px;width:519px;height:120px;border:1px solid #000;background:#4b4b4b;box-shadow:5px 5px 5px rgba(0,0,0,0.42)">
<div style="left:0;top:0;width:100%;height:18px;background:#f4f4f4;border-bottom:1px solid #000;box-sizing:content-box"></div>
<svg style="position:absolute;left:1px;top:1px" width="56" height="17" viewBox="0 0 56 17"><defs><linearGradient id="hg" x1="0" x2="1"><stop offset="0" stop-color="#ffa000"/><stop offset="0.2" stop-color="#e0ff00"/><stop offset="0.4" stop-color="#00ff40"/><stop offset="0.55" stop-color="#00e0ff"/><stop offset="0.75" stop-color="#2040ff"/><stop offset="1" stop-color="#ff00ff"/></linearGradient><linearGradient id="vg" x1="0" y1="0" x2="0" y2="1"><stop offset="0" stop-color="#fff" stop-opacity="0.25"/><stop offset="0.3" stop-color="#000" stop-opacity="0"/><stop offset="1" stop-color="#000" stop-opacity="1"/></linearGradient></defs><rect x="0.5" y="0.5" width="15" height="15" fill="url(#hg)" stroke="#000080"/><rect x="1" y="1" width="14" height="14" fill="url(#vg)"/><rect x="20.5" y="6.5" width="14" height="9" fill="#fff" stroke="#001060"/><rect x="22" y="8" width="11" height="6" fill="#1a28b0"/><path d="M23 13.5L33 3" stroke="#f0b020" stroke-width="2.6"/><path d="M33 3l1.5-1.5" stroke="#50a0d0" stroke-width="2.4"/><rect x="40.5" y="0.5" width="15" height="15" fill="#fff" stroke="#3080f0"/><rect x="41" y="1" width="14" height="2" fill="#2a70e0"/><path d="M43 5v6h3M44 10l2 1-2 1M46 5h2M50 5h3M48 5l1 2 1-2M51 5l1 2" stroke="#1010e0" fill="none" stroke-width="1"/><rect x="46" y="9" width="7" height="3" rx="1" fill="#f0a020" stroke="#c01050" stroke-width="0.8"/></svg>
<div class="m" style="left:2px;top:23px;font-size:15px;line-height:19px"><span style="color:#6c6c6c">__text:00000001044AD540</span><br><span style="color:#6c6c6c">__text:00000001044AD540</span> <span style="color:#f4c800">loc_1044AD540</span><br><span style="color:#6c6c6c">__text:00000001044AD540</span> <span style="color:#f2f2f2">BL              </span><span style="background:#551257;color:#f4c800">___stack_chk_fail</span><br><span style="color:#6c6c6c">__text:00000001044AD540</span> <span style="color:#767676">; End of function xxx_step1</span><br><span style="color:#6c6c6c">__text:00000001044AD540</span></div></div>
<svg style="position:absolute;left:0;top:0" width="1788" height="840"><path d="M1301 5 L1301 19 L1302 20 L1305 20 L1306 21 L1306 27" fill="none" stroke="#c84c4c" stroke-width="2"/><path d="M1301 24h10L1306 35z" fill="#c00000"/><path d="M1321 5 L1321 20 L1558 20 L1558 151 L1324 151 L1324 165" fill="none" stroke="#4aa04a" stroke-width="2"/><path d="M1319 162h10L1324 173z" fill="#008a00"/><path d="M1035 -5 L1035 155 L1264 155 L1264 165" fill="none" stroke="#4aa04a" stroke-width="2"/><path d="M1259 162h10L1264 173z" fill="#008a00"/><path d="M1050 -5 L1050 151 L1284 151 L1284 165" fill="none" stroke="#4aa04a" stroke-width="2"/><path d="M1279 162h10L1284 173z" fill="#008a00"/><path d="M1316 136 L1316 151 L1304 151 L1304 165" fill="none" stroke="#4aa04a" stroke-width="2"/><path d="M1299 162h10L1304 173z" fill="#008a00"/><path d="M1573 -5 L1573 155 L1344 155 L1344 165" fill="none" stroke="#4aa04a" stroke-width="2"/><path d="M1339 162h10L1344 173z" fill="#008a00"/><path d="M1588 -5 L1588 159 L1364 159 L1364 165" fill="none" stroke="#4aa04a" stroke-width="2"/><path d="M1359 162h10L1364 173z" fill="#008a00"/><path d="M1296 136 L1296 159 L776 159 L776 165" fill="none" stroke="#c84c4c" stroke-width="2"/><path d="M771 162h10L776 173z" fill="#c00000"/><path d="M766 313 L766 499 L503 499 L503 506" fill="none" stroke="#c84c4c" stroke-width="2"/><path d="M498 503h10L503 514z" fill="#c00000"/><path d="M786 313 L786 499 L1050 499 L1050 506" fill="none" stroke="#4aa04a" stroke-width="2"/><path d="M1045 503h10L1050 514z" fill="#008a00"/></svg>
</div>
<div style="left:0px;top:1005px;width:1788px;height:22px;background:#353535"></div>
<div style="left:0px;top:1007px;width:53px;height:17px;border:1px solid #4c4c4c;border-radius:3px;background:#333"></div>
<div class="m" style="left:3px;top:1010px;font-family:'Liberation Mono',monospace;font-size:11.67px;line-height:14px;color:#e8e8e8">100.00%</div>
<div style="left:55px;top:1007px;width:74px;height:17px;border:1px solid #4c4c4c;border-radius:3px;background:#333"></div>
<div class="m" style="left:58px;top:1010px;font-family:'Liberation Mono',monospace;font-size:11.67px;line-height:14px;color:#e8e8e8">(700,4293)</div>
<div style="left:131px;top:1007px;width:67px;height:17px;border:1px solid #4c4c4c;border-radius:3px;background:#333"></div>
<div class="m" style="left:134px;top:1010px;font-family:'Liberation Mono',monospace;font-size:11.67px;line-height:14px;color:#e8e8e8">(976,101)</div>
<div style="left:200px;top:1007px;width:60px;height:17px;border:1px solid #4c4c4c;border-radius:3px;background:#333"></div>
<div class="m" style="left:203px;top:1010px;font-family:'Liberation Mono',monospace;font-size:11.67px;line-height:14px;color:#e8e8e8">034A5540</div>
<div style="left:263px;top:1007px;width:290px;height:17px;border:1px solid #4c4c4c;border-radius:3px;background:#333"></div>
<div class="m" style="left:266px;top:1010px;font-family:'Liberation Mono',monospace;font-size:11.67px;line-height:14px;color:#e8e8e8">00000001044AD540: xxx_step1:loc_1044AD540</div>
<div style="left:555px;top:1007px;width:214px;height:17px;border:1px solid #4c4c4c;border-radius:3px;background:#333"></div>
<div class="m" style="left:558px;top:1010px;font-family:'Liberation Mono',monospace;font-size:11.67px;line-height:14px;color:#e8e8e8">(Synchronized with Hex View-1)</div>
<svg style="position:absolute;left:3px;top:1034px" width="16" height="16" viewBox="0 0 16 16"><defs><linearGradient id="tb14" x1="0" x2="1"><stop offset="0" stop-color="#5ad8ff"/><stop offset="1" stop-color="#1a30d0"/></linearGradient><linearGradient id="bg14" x1="0" y1="0" x2="1" y2="1"><stop offset="0" stop-color="#d0f4ff"/><stop offset="1" stop-color="#ffffff"/></linearGradient></defs><rect x="0.5" y="0.5" width="15" height="15" fill="url(#bg14)" stroke="#2a78e8"/><rect x="1" y="1" width="14" height="2.5" fill="url(#tb14)"/><polygon points="8,4.8 11.5,6.8 11.5,11 8,13 4.5,11 4.5,6.8" fill="#dde8ff" stroke="#2020f0" stroke-width="1.3"/></svg>
<div class="t" style="left:24px;top:1035px;font-size:11px;line-height:15px;color:#ececec">Hex View-1</div>
<div style="left:1472px;top:1034px;width:32px;height:20px;background:#676767;border-radius:4px"></div>
<svg style="position:absolute;left:1483px;top:1039px" width="10" height="10"><rect x="0.75" y="0.75" width="8.5" height="8.5" fill="none" stroke="#333" stroke-width="1.5"/><rect x="0" y="0" width="10" height="3" fill="#333"/></svg>
<div style="left:1510px;top:1034px;width:32px;height:20px;background:#676767;border-radius:4px"></div>
<svg style="position:absolute;left:1521px;top:1039px" width="10" height="10"><rect x="0.75" y="3.75" width="5.5" height="5.5" fill="none" stroke="#333" stroke-width="1.5"/><path d="M3.5 3V0.75H9.25V6.5H7" fill="none" stroke="#333" stroke-width="1.5"/></svg>
<div style="left:1548px;top:1034px;width:32px;height:20px;background:#676767;border-radius:4px"></div>
<svg style="position:absolute;left:1559px;top:1039px" width="10" height="10"><path d="M1 1l8 8M9 1l-8 8" stroke="#333" stroke-width="1.8"/></svg>
<div style="left:0px;top:1059px;width:1563px;height:293px;background:#4d4d4d"></div>
<div style="left:1564px;top:1059px;width:18px;height:293px;background:#353535"></div>
<div style="left:1566px;top:1062px;width:14px;height:20px;background:#5c5c5c;border-radius:7px"></div>
<div style="left:0;top:1059px;width:1563px;height:293px;overflow:hidden">
<div class="m" style="left:0;top:1px;font-size:11.67px;line-height:15px"><span style="color:#8c8a6e">00000001044AD440</span>  <span style="color:#f09c74">88 11 40 B9 29 6C 93 52  E9 E0 B4 72 28 05 08 0B</span>  <span style="color:#b8b8b8">..@.)l.R...r(...</span><br><span style="color:#8c8a6e">00000001044AD450</span>  <span style="color:#f09c74">E8 0F 00 B9 A8 55 97 52  E8 4F 00 B9 EB A2 00 94</span>  <span style="color:#b8b8b8">.....U.R........</span><br><span style="color:#8c8a6e">00000001044AD460</span>  <span style="color:#f09c74">A8 C3 5B B8 1F 00 08 6B  20 05 00 54 5D A4 00 94</span>  <span style="color:#b8b8b8">.......k·..T]...</span><br><span style="color:#8c8a6e">00000001044AD470</span>  <span style="color:#f09c74">A8 C3 59 B8 1F 00 08 6B  A0 04 00 54 19 A3 00 94</span>  <span style="color:#b8b8b8">.......k...T....</span><br><span style="color:#8c8a6e">00000001044AD480</span>  <span style="color:#f09c74">A8 C3 57 B8 1F 00 08 6B  20 04 00 54 68 02 40 <span style="background:#55105a;color:#f2a0d0">F9</span></span>  <span style="color:#b8b8b8">.......k·..Th.@.</span><br><span style="color:#8c8a6e">00000001044AD490</span>  <span style="color:#f09c74">08 01 40 <span style="background:#55105a;color:#f2a0d0">F9</span> 08 01 40 <span style="background:#55105a;color:#f2a0d0">F9</span>  68 06 00 <span style="background:#55105a;color:#f2a0d0">F9</span> E8 A3 40 B9</span>  <span style="color:#b8b8b8">..@...@.h.......</span><br><span style="color:#8c8a6e">00000001044AD4A0</span>  <span style="color:#f09c74">E9 33 8C 52 69 24 A9 72  08 01 09 0B A8 83 17 B8</span>  <span style="color:#b8b8b8">...Ri$.r........</span><br><span style="color:#8c8a6e">00000001044AD4B0</span>  <span style="color:#f09c74">B9 A5 00 94 A8 83 57 B8  1F 00 08 6B 80 02 00 54</span>  <span style="color:#b8b8b8">......W....k...T</span><br><span style="color:#8c8a6e">00000001044AD4C0</span>  <span style="color:#f09c74">01 A5 00 94 E8 4F 40 B9  1F 00 08 6B 00 02 00 54</span>  <span style="color:#b8b8b8">...........k...T</span><br><span style="color:#8c8a6e">00000001044AD4D0</span>  <span style="color:#f09c74">69 A1 00 94 E8 0F 40 B9  1F 00 08 6B 80 01 00 54</span>  <span style="color:#b8b8b8">i..........k...T</span><br><span style="color:#8c8a6e">00000001044AD4E0</span>  <span style="color:#f09c74">A8 83 5E F8 69 46 00 D0  29 E1 45 <span style="background:#55105a;color:#f2a0d0">F9</span> 29 01 40 <span style="background:#55105a;color:#f2a0d0">F9</span></span>  <span style="color:#b8b8b8">..^.iF......).@.</span><br><span style="color:#8c8a6e">00000001044AD4F0</span>  <span style="color:#f09c74">3F 01 08 EB 61 02 00 54  00 00 80 52 FD 7B 53 A9</span>  <span style="color:#b8b8b8">?......T...R.{S.</span><br><span style="color:#8c8a6e">00000001044AD500</span>  <span style="color:#f09c74">F4 4F 52 A9 FF 03 05 91  C0 03 5F D6 E8 8F 40 B9</span>  <span style="color:#b8b8b8">.........._...@.</span><br><span style="color:#8c8a6e">00000001044AD510</span>  <span style="color:#f09c74">1F 01 00 71 E8 2C A1 52  C9 5B A3 52 20 01 88 1A</span>  <span style="color:#b8b8b8">...q...R...R·...</span><br><span style="color:#8c8a6e">00000001044AD520</span>  <span style="color:#f09c74">E4 3F 00 94 E8 0F 80 52  A8 03 1C B8 A8 03 01 D1</span>  <span style="color:#b8b8b8">.......R........</span><br><span style="color:#8c8a6e">00000001044AD530</span>  <span style="color:#f09c74">00 41 00 91 04 00 00 94  A0 03 5C B8 51 4B 03 94</span>  <span style="color:#b8b8b8">.A........\.QK..</span><br><span style="color:#f0a800">00000001044AD540</span>  <span style="color:#f09c74"><span style="background:#e8a080;color:#fff">D8</span><span style="background:#e8a080"> </span><span style="background:#e8a080;color:#fff">4A</span><span style="background:#e8a080"> </span><span style="background:#e8a080;color:#fff">03</span><span style="background:#e8a080"> </span><span style="background:#e8a080;color:#fff">94</span> 08 00 80 D2  49 14 00 D0 29 41 35 91</span>  <span style="color:#b8b8b8">.............A5.</span><br><span style="color:#8c8a6e">00000001044AD550</span>  <span style="color:#f09c74">0A 05 40 92 2A 79 6A B8  0B 78 68 B8 6A 01 0A 4A</span>  <span style="color:#b8b8b8">..@.*yj..xh.j..J</span><br><span style="color:#8c8a6e">00000001044AD560</span>  <span style="color:#f09c74">0A 78 28 B8 08 05 00 91  1F 01 04 F1 21 FF FF 54</span>  <span style="color:#b8b8b8">.x(.........!..T</span><br><span style="color:#8c8a6e">00000001044AD570</span>  <span style="color:#f09c74">C0 03 5F D6 FF 83 01 D1  F4 4F 04 A9 FD 7B 05 A9</span>  <span style="color:#b8b8b8">..._.....O...{..</span></div></div>
<div style="left:0px;top:1352px;width:1583px;height:40px;background:#353535"></div>
<div style="left:0px;top:1354px;width:60px;height:17px;border:1px solid #4c4c4c;border-radius:3px;background:#333"></div>
<div class="m" style="left:3px;top:1357px;font-family:'Liberation Mono',monospace;font-size:11.67px;line-height:14px;color:#e8e8e8">034A5540</div>
<div style="left:62px;top:1354px;width:291px;height:17px;border:1px solid #4c4c4c;border-radius:3px;background:#333"></div>
<div class="m" style="left:65px;top:1357px;font-family:'Liberation Mono',monospace;font-size:11.67px;line-height:14px;color:#e8e8e8">00000001044AD540: xxx_step1:loc_1044AD540</div>
<div style="left:355px;top:1354px;width:221px;height:17px;border:1px solid #4c4c4c;border-radius:3px;background:#333"></div>
<div class="m" style="left:358px;top:1357px;font-family:'Liberation Mono',monospace;font-size:11.67px;line-height:14px;color:#e8e8e8">(Synchronized with IDA View-PC)</div>
<div style="left:0px;top:1374px;width:137px;height:17px;border:1px solid #4c4c4c;border-radius:3px;background:#333"></div>
<div class="m" style="left:3px;top:1377px;font-family:'Liberation Mono',monospace;font-size:11.67px;line-height:14px;color:#e8e8e8">AC:0000000102437E94</div>
<div style="left:139px;top:1374px;width:74px;height:17px;border:1px solid #4c4c4c;border-radius:3px;background:#333"></div>
<div class="m" style="left:142px;top:1377px;font-family:'Liberation Mono',monospace;font-size:11.67px;line-height:14px;color:#e8e8e8">Down</div>
<div style="left:215px;top:1374px;width:81px;height:17px;border:1px solid #4c4c4c;border-radius:3px;background:#333"></div>
<div class="m" style="left:218px;top:1377px;font-family:'Liberation Mono',monospace;font-size:11.67px;line-height:14px;color:#e8e8e8">Disk: 143GB</div>
<svg style="position:absolute;left:1590px;top:1034px" width="16" height="16" viewBox="0 0 16 16"><defs><linearGradient id="tb15" x1="0" x2="1"><stop offset="0" stop-color="#5ad8ff"/><stop offset="1" stop-color="#1a30d0"/></linearGradient><linearGradient id="bg15" x1="0" y1="0" x2="1" y2="1"><stop offset="0" stop-color="#d0f4ff"/><stop offset="1" stop-color="#ffffff"/></linearGradient></defs><rect x="0.5" y="0.5" width="15" height="15" fill="url(#bg15)" stroke="#2a78e8"/><rect x="1" y="1" width="14" height="2.5" fill="url(#tb15)"/><polygon points="8,4.8 11.5,6.8 11.5,11 8,13 4.5,11 4.5,6.8" fill="#dde8ff" stroke="#2020f0" stroke-width="1.3"/></svg>
<div class="t" style="left:1611px;top:1035px;font-size:11px;line-height:15px;color:#ececec">Stack view</div>
<div style="left:2449px;top:1034px;width:32px;height:20px;background:#676767;border-radius:4px"></div>
<svg style="position:absolute;left:2460px;top:1039px" width="10" height="10"><rect x="0.75" y="0.75" width="8.5" height="8.5" fill="none" stroke="#333" stroke-width="1.5"/><rect x="0" y="0" width="10" height="3" fill="#333"/></svg>
<div style="left:2487px;top:1034px;width:32px;height:20px;background:#676767;border-radius:4px"></div>
<svg style="position:absolute;left:2498px;top:1039px" width="10" height="10"><rect x="0.75" y="3.75" width="5.5" height="5.5" fill="none" stroke="#333" stroke-width="1.5"/><path d="M3.5 3V0.75H9.25V6.5H7" fill="none" stroke="#333" stroke-width="1.5"/></svg>
<div style="left:2525px;top:1034px;width:32px;height:20px;background:#676767;border-radius:4px"></div>
<svg style="position:absolute;left:2536px;top:1039px" width="10" height="10"><path d="M1 1l8 8M9 1l-8 8" stroke="#333" stroke-width="1.8"/></svg>
<div style="left:1587px;top:1059px;width:951px;height:273px;background:#4d4d4d"></div>
<div style="left:1587px;top:1059px;width:951px;height:15px;background:#2b809c"></div>
<div style="left:2538px;top:1059px;width:20px;height:273px;background:#353535"></div>
<div style="left:2541px;top:1062px;width:14px;height:20px;background:#5c5c5c;border-radius:7px"></div>
<div class="m" style="left:1587px;top:1060px;font-size:11.67px;line-height:15px"><span style="color:#f0c000">000000016EDF0190</span>  <span style="color:#e06050">00000001053B4D67</span>  <span style="color:#5a6a70">__</span><span style="color:#7aa0a8">data:00000001053B4D67</span><br><span style="color:#8c8a6e">000000016EDF0198</span>  <span style="color:#e8604a">0000BAAD00000000</span>  <span style="color:#8a8a8a">MEMORY:0000BAAD00000000</span><br><span style="color:#8c8a6e">000000016EDF01A0</span>  <span style="color:#e8604a">000000016EDF01C0</span>  <span style="color:#8a8a8a">MEMORY:000000016EDF01C0</span><br><span style="color:#8c8a6e">000000016EDF01A8</span>  <span style="color:#e8604a">000000016EDF01C0</span>  <span style="color:#8a8a8a">MEMORY:000000016EDF01C0</span><br><span style="color:#8c8a6e">000000016EDF01B0</span>  <span style="color:#e8604a">00000000AC7C8FA6</span>  <span style="color:#8a8a8a">MEMORY:00000000AC7C8FA6</span><br><span style="color:#8c8a6e">000000016EDF01B8</span>  <span style="color:#e8604a">00000000F450C000</span>  <span style="color:#8a8a8a">MEMORY:00000000F450C000</span><br><span style="color:#8c8a6e">000000016EDF01C0</span>  <span style="color:#e8604a">000000016EDF01C0</span>  <span style="color:#8a8a8a">MEMORY:000000016EDF01C0</span><br><span style="color:#8c8a6e">000000016EDF01C8</span>  <span style="color:#e8604a">000000016EDF01C0</span>  <span style="color:#8a8a8a">MEMORY:000000016EDF01C0</span><br><span style="color:#8c8a6e">000000016EDF01D0</span>  <span style="color:#e8604a">00000000AC7C8FA6</span>  <span style="color:#8a8a8a">MEMORY:00000000AC7C8FA6</span><br><span style="color:#8c8a6e">000000016EDF01D8</span>  <span style="color:#e8604a">0000BAAD91DE5EFC</span>  <span style="color:#8a8a8a">MEMORY:0000BAAD91DE5EFC</span><br><span style="color:#8c8a6e">000000016EDF01E0</span>  <span style="color:#e8604a">000000016EDF01E0</span>  <span style="color:#8a8a8a">MEMORY:000000016EDF01E0</span><br><span style="color:#8c8a6e">000000016EDF01E8</span>  <span style="color:#e8604a">000000016EDF01E0</span>  <span style="color:#8a8a8a">MEMORY:000000016EDF01E0</span><br><span style="color:#8c8a6e">000000016EDF01F0</span>  <span style="color:#e8604a">00000000267A759D</span>  <span style="color:#8a8a8a">MEMORY:00000000267A759D</span><br><span style="color:#8c8a6e">000000016EDF01F8</span>  <span style="color:#e8604a">40FE4CBE9892321E</span>  <span style="color:#8a8a8a">MEMORY:40FE4CBE9892321E</span><br><span style="color:#8c8a6e">000000016EDF0200</span>  <span style="color:#e8604a">000000016EDF0200</span>  <span style="color:#8a8a8a">MEMORY:000000016EDF0200</span><br><span style="color:#8c8a6e">000000016EDF0208</span>  <span style="color:#e8604a">000000016EDF0200</span>  <span style="color:#8a8a8a">MEMORY:000000016EDF0200</span><br><span style="color:#8c8a6e">000000016EDF0210</span>  <span style="color:#e8604a">0000000000000001</span>  <span style="color:#8a8a8a">MEMORY:</span><span style="color:#f0f0f0">qword_0+1</span><br><span style="color:#8c8a6e">000000016EDF0218</span>  <span style="color:#e8604a">00000001044C3748</span>  <span style="color:#f4c800">sub_1044C3674+D4</span></div>
<div style="left:1587px;top:1334px;width:53px;height:17px;border:1px solid #4c4c4c;border-radius:3px;background:#333"></div>
<div class="m" style="left:1590px;top:1337px;font-family:'Liberation Mono',monospace;font-size:11.67px;line-height:14px;color:#e8e8e8">UNKNOWN</div>
<div style="left:1642px;top:1334px;width:291px;height:17px;border:1px solid #4c4c4c;border-radius:3px;background:#333"></div>
<div class="m" style="left:1645px;top:1337px;font-family:'Liberation Mono',monospace;font-size:11.67px;line-height:14px;color:#e8e8e8">000000016EDF0190: MEMORY:000000016EDF0190</div>
<div style="left:1935px;top:1334px;width:157px;height:17px;border:1px solid #4c4c4c;border-radius:3px;background:#333"></div>
<div class="m" style="left:1938px;top:1337px;font-family:'Liberation Mono',monospace;font-size:11.67px;line-height:14px;color:#e8e8e8">(Synchronized with SP)</div>
<div style="left:1590px;top:1355px;width:836px;height:14px;background:#595959;border-radius:7px"></div>
<svg style="position:absolute;left:1797px;top:147px" width="15" height="15" viewBox="0 0 15 15"><ellipse cx="7.5" cy="8.5" rx="5" ry="6" fill="#d06020"/><ellipse cx="7.5" cy="4" rx="3.5" ry="2" fill="#603010"/><path d="M7.5 4v10" stroke="#902000"/><path d="M1 2l3 2M14 2l-3 2M0 8h2.5M15 8h-2.5M1 14l3-2M14 14l-3-2" stroke="#111" stroke-width="1.2"/></svg>
<div class="t" style="left:1816px;top:148px;font-size:11px;line-height:15px;color:#ececec">General registers</div>
<div style="left:2449px;top:146px;width:32px;height:20px;background:#676767;border-radius:4px"></div>
<svg style="position:absolute;left:2460px;top:151px" width="10" height="10"><rect x="0.75" y="0.75" width="8.5" height="8.5" fill="none" stroke="#333" stroke-width="1.5"/><rect x="0" y="0" width="10" height="3" fill="#333"/></svg>
<div style="left:2487px;top:146px;width:32px;height:20px;background:#676767;border-radius:4px"></div>
<svg style="position:absolute;left:2498px;top:151px" width="10" height="10"><rect x="0.75" y="3.75" width="5.5" height="5.5" fill="none" stroke="#333" stroke-width="1.5"/><path d="M3.5 3V0.75H9.25V6.5H7" fill="none" stroke="#333" stroke-width="1.5"/></svg>
<div style="left:2525px;top:146px;width:32px;height:20px;background:#676767;border-radius:4px"></div>
<svg style="position:absolute;left:2536px;top:151px" width="10" height="10"><path d="M1 1l8 8M9 1l-8 8" stroke="#333" stroke-width="1.8"/></svg>
<div style="left:1792px;top:171px;width:688px;height:267px;background:#4d4d4d;border:1px solid #7a7a7a"></div>
<div style="left:2459px;top:172px;width:20px;height:265px;background:#353535"></div>
<div style="left:2462px;top:312px;width:14px;height:122px;background:#5c5c5c;border-radius:7px"></div>
<div style="left:1793px;top:172px;width:666px;height:265px;overflow:hidden">
<div class="m" style="left:2px;top:-8px;font-size:11.67px;line-height:16px;color:#9a9a9a">X17</div>
<div class="m" style="left:26px;top:-8px;font-size:11.67px;line-height:16px;color:#f4f4f4">0000000180B714FC</div>
<svg style="position:absolute;left:144px;top:-5px" width="12" height="11" viewBox="0 0 12 11"><path d="M2 0v6h6" fill="none" stroke="#2a70f0" stroke-width="2"/><path d="M7 2.5l4 3.5-4 3.5z" fill="#2a70f0"/></svg>
<div class="m" style="left:161px;top:-8px;font-size:11.67px;line-height:16px"><span style="color:#a8aa10">CoreFoundation:__text:0000000180B714FC</span></div>
<div class="m" style="left:2px;top:8px;font-size:11.67px;line-height:16px;color:#9a9a9a">X18</div>
<div class="m" style="left:26px;top:8px;font-size:11.67px;line-height:16px;color:#f4f4f4">0000000000000000</div>
<svg style="position:absolute;left:144px;top:11px" width="12" height="11" viewBox="0 0 12 11"><path d="M2 0v6h6" fill="none" stroke="#2a70f0" stroke-width="2"/><path d="M7 2.5l4 3.5-4 3.5z" fill="#2a70f0"/></svg>
<div class="m" style="left:161px;top:8px;font-size:11.67px;line-height:16px"><span style="color:#8a8a8a">MEMORY:</span><span style="color:#f0f0f0">qword_0</span></div>
<div class="m" style="left:2px;top:24px;font-size:11.67px;line-height:16px;color:#9a9a9a">X19</div>
<div class="m" style="left:26px;top:24px;font-size:11.67px;line-height:16px;color:#f8f8a0">000000016EDF0220</div>
<svg style="position:absolute;left:144px;top:27px" width="12" height="11" viewBox="0 0 12 11"><path d="M2 0v6h6" fill="none" stroke="#2a70f0" stroke-width="2"/><path d="M7 2.5l4 3.5-4 3.5z" fill="#2a70f0"/></svg>
<div class="m" style="left:161px;top:24px;font-size:11.67px;line-height:16px"><span style="color:#a8aa10">MEMORY:000000016EDF0220</span></div>
<div class="m" style="left:2px;top:40px;font-size:11.67px;line-height:16px;color:#9a9a9a">X20</div>
<div class="m" style="left:26px;top:40px;font-size:11.67px;line-height:16px;color:#f8f8a0">000000016EDF0748</div>
<svg style="position:absolute;left:144px;top:43px" width="12" height="11" viewBox="0 0 12 11"><path d="M2 0v6h6" fill="none" stroke="#2a70f0" stroke-width="2"/><path d="M7 2.5l4 3.5-4 3.5z" fill="#2a70f0"/></svg>
<div class="m" style="left:161px;top:40px;font-size:11.67px;line-height:16px"><span style="color:#a8aa10">MEMORY:000000016EDF0748</span></div>
<div class="m" style="left:2px;top:56px;font-size:11.67px;line-height:16px;color:#9a9a9a">X21</div>
<div class="m" style="left:26px;top:56px;font-size:11.67px;line-height:16px;color:#f8f8a0">0000000198425031</div>
<svg style="position:absolute;left:144px;top:59px" width="12" height="11" viewBox="0 0 12 11"><path d="M2 0v6h6" fill="none" stroke="#2a70f0" stroke-width="2"/><path d="M7 2.5l4 3.5-4 3.5z" fill="#2a70f0"/></svg>
<div class="m" style="left:161px;top:56px;font-size:11.67px;line-height:16px"><span style="color:#a8aa10">libobjc.A.dylib:__cstring:0000000198425031</span></div>
<div class="m" style="left:2px;top:72px;font-size:11.67px;line-height:16px;color:#9a9a9a">X22</div>
<div class="m" style="left:26px;top:72px;font-size:11.67px;line-height:16px;color:#f8f8a0">0000000108B0DEC8</div>
<svg style="position:absolute;left:144px;top:75px" width="12" height="11" viewBox="0 0 12 11"><path d="M2 0v6h6" fill="none" stroke="#2a70f0" stroke-width="2"/><path d="M7 2.5l4 3.5-4 3.5z" fill="#2a70f0"/></svg>
<div class="m" style="left:161px;top:72px;font-size:11.67px;line-height:16px"><span style="color:#a8aa10">MEMORY:0000000108B0DEC8</span></div>
<div class="m" style="left:2px;top:88px;font-size:11.67px;line-height:16px;color:#9a9a9a">X23</div>
<div class="m" style="left:26px;top:88px;font-size:11.67px;line-height:16px;color:#f4f4f4">0000000104575ED4</div>
<svg style="position:absolute;left:144px;top:91px" width="12" height="11" viewBox="0 0 12 11"><path d="M2 0v6h6" fill="none" stroke="#2a70f0" stroke-width="2"/><path d="M7 2.5l4 3.5-4 3.5z" fill="#2a70f0"/></svg>
<div class="m" style="left:161px;top:88px;font-size:11.67px;line-height:16px"><span style="color:#f4c800">+[BcStartup load]</span></div>
<div class="m" style="left:2px;top:104px;font-size:11.67px;line-height:16px;color:#9a9a9a">X24</div>
<div class="m" style="left:26px;top:104px;font-size:11.67px;line-height:16px;color:#f4f4f4">0000000108B0DEC0</div>
<svg style="position:absolute;left:144px;top:107px" width="12" height="11" viewBox="0 0 12 11"><path d="M2 0v6h6" fill="none" stroke="#2a70f0" stroke-width="2"/><path d="M7 2.5l4 3.5-4 3.5z" fill="#2a70f0"/></svg>
<div class="m" style="left:161px;top:104px;font-size:11.67px;line-height:16px"><span style="color:#a8aa10">MEMORY:0000000108B0DEC0</span></div>
<div class="m" style="left:2px;top:120px;font-size:11.67px;line-height:16px;color:#9a9a9a">X25</div>
<div class="m" style="left:26px;top:120px;font-size:11.67px;line-height:16px;color:#f4f4f4">000000019B28F2DE</div>
<svg style="position:absolute;left:144px;top:123px" width="12" height="11" viewBox="0 0 12 11"><path d="M2 0v6h6" fill="none" stroke="#2a70f0" stroke-width="2"/><path d="M7 2.5l4 3.5-4 3.5z" fill="#2a70f0"/></svg>
<div class="m" style="left:161px;top:120px;font-size:11.67px;line-height:16px"><span style="color:#a8aa10">libobjc.A.dylib:__OBJC_RO:000000019B28F2DE</span></div>
<div class="m" style="left:2px;top:136px;font-size:11.67px;line-height:16px;color:#9a9a9a">X26</div>
<div class="m" style="left:26px;top:136px;font-size:11.67px;line-height:16px;color:#f4f4f4">00000001051358E0</div>
<svg style="position:absolute;left:144px;top:139px" width="12" height="11" viewBox="0 0 12 11"><path d="M2 0v6h6" fill="none" stroke="#2a70f0" stroke-width="2"/><path d="M7 2.5l4 3.5-4 3.5z" fill="#2a70f0"/></svg>
<div class="m" style="left:161px;top:136px;font-size:11.67px;line-height:16px"><span style="color:#8a8a8a">__objc_data:</span><span style="color:#f0f0f0">_OBJC_CLASS_$_BcStartup</span></div>
<div class="m" style="left:2px;top:152px;font-size:11.67px;line-height:16px;color:#9a9a9a">X27</div>
<div class="m" style="left:26px;top:152px;font-size:11.67px;line-height:16px;color:#f4f4f4">00000000000018C0</div>
<svg style="position:absolute;left:144px;top:155px" width="12" height="11" viewBox="0 0 12 11"><path d="M2 0v6h6" fill="none" stroke="#2a70f0" stroke-width="2"/><path d="M7 2.5l4 3.5-4 3.5z" fill="#2a70f0"/></svg>
<div class="m" style="left:161px;top:152px;font-size:11.67px;line-height:16px"><span style="color:#a8aa10">MEMORY:00000000000018C0</span></div>
<div class="m" style="left:2px;top:168px;font-size:11.67px;line-height:16px;color:#9a9a9a">X28</div>
<div class="m" style="left:26px;top:168px;font-size:11.67px;line-height:16px;color:#f4f4f4">00000001F4830000</div>
<svg style="position:absolute;left:144px;top:171px" width="12" height="11" viewBox="0 0 12 11"><path d="M2 0v6h6" fill="none" stroke="#2a70f0" stroke-width="2"/><path d="M7 2.5l4 3.5-4 3.5z" fill="#2a70f0"/></svg>
<div class="m" style="left:161px;top:168px;font-size:11.67px;line-height:16px"><span style="color:#a8aa10">libobjc.A.dylib:__objc_data:00000001F4830000</span></div>
<div class="m" style="left:2px;top:184px;font-size:11.67px;line-height:16px;color:#9a9a9a">X29</div>
<div class="m" style="left:26px;top:184px;font-size:11.67px;line-height:16px;color:#f8f8a0">000000016EDF02C0</div>
<svg style="position:absolute;left:144px;top:187px" width="12" height="11" viewBox="0 0 12 11"><path d="M2 0v6h6" fill="none" stroke="#2a70f0" stroke-width="2"/><path d="M7 2.5l4 3.5-4 3.5z" fill="#2a70f0"/></svg>
<div class="m" style="left:161px;top:184px;font-size:11.67px;line-height:16px"><span style="color:#a8aa10">MEMORY:000000016EDF02C0</span></div>
<div class="m" style="left:2px;top:200px;font-size:11.67px;line-height:16px;color:#9a9a9a">X30</div>
<div class="m" style="left:26px;top:200px;font-size:11.67px;line-height:16px;color:#f4f4f4">00000001044AD540</div>
<svg style="position:absolute;left:144px;top:203px" width="12" height="11" viewBox="0 0 12 11"><path d="M2 0v6h6" fill="none" stroke="#2a70f0" stroke-width="2"/><path d="M7 2.5l4 3.5-4 3.5z" fill="#2a70f0"/></svg>
<div class="m" style="left:161px;top:200px;font-size:11.67px;line-height:16px"><span style="color:#f4c800">xxx_step1:loc_1044AD540</span></div>
<div class="m" style="left:2px;top:216px;font-size:11.67px;line-height:16px;color:#9a9a9a">SP</div>
<div class="m" style="left:26px;top:216px;font-size:11.67px;line-height:16px;color:#f8f8a0">000000016EDF0190</div>
<svg style="position:absolute;left:144px;top:219px" width="12" height="11" viewBox="0 0 12 11"><path d="M2 0v6h6" fill="none" stroke="#2a70f0" stroke-width="2"/><path d="M7 2.5l4 3.5-4 3.5z" fill="#2a70f0"/></svg>
<div class="m" style="left:161px;top:216px;font-size:11.67px;line-height:16px"><span style="color:#a8aa10">MEMORY:000000016EDF0190</span></div>
<div class="m" style="left:2px;top:232px;font-size:11.67px;line-height:16px;color:#9a9a9a">PC</div>
<div class="m" style="left:26px;top:232px;font-size:11.67px;line-height:16px;color:#f8f8a0">0000000104580280</div>
<svg style="position:absolute;left:144px;top:235px" width="12" height="11" viewBox="0 0 12 11"><path d="M2 0v6h6" fill="none" stroke="#2a70f0" stroke-width="2"/><path d="M7 2.5l4 3.5-4 3.5z" fill="#2a70f0"/></svg>
<div class="m" style="left:161px;top:232px;font-size:11.67px;line-height:16px"><span style="color:#f4c800">_exit</span></div>
<div class="m" style="left:2px;top:248px;font-size:11.67px;line-height:16px;color:#9a9a9a">PSR</div>
<div class="m" style="left:26px;top:248px;font-size:11.67px;line-height:16px;color:#f8f8a0">60000000</div>
</div>
<div style="left:2484px;top:171px;width:75px;height:267px;background:#4d4d4d;border:1px solid #7a7a7a;border-right:none"></div>
<div class="m" style="left:2487px;top:175px;font-size:11.67px;line-height:15px;color:#9a9a9a">N</div>
<div class="m" style="left:2524px;top:175px;font-size:11.67px;line-height:15px;color:#f4f4f4">0</div>
<div class="m" style="left:2487px;top:190px;font-size:11.67px;line-height:15px;color:#9a9a9a">Z</div>
<div class="m" style="left:2524px;top:190px;font-size:11.67px;line-height:15px;color:#f8f8a0">1</div>
<div class="m" style="left:2487px;top:205px;font-size:11.67px;line-height:15px;color:#9a9a9a">C</div>
<div class="m" style="left:2524px;top:205px;font-size:11.67px;line-height:15px;color:#f8f8a0">1</div>
<div class="m" style="left:2487px;top:220px;font-size:11.67px;line-height:15px;color:#9a9a9a">V</div>
<div class="m" style="left:2524px;top:220px;font-size:11.67px;line-height:15px;color:#f4f4f4">0</div>
<div class="m" style="left:2487px;top:235px;font-size:11.67px;line-height:15px;color:#9a9a9a">SS</div>
<div class="m" style="left:2524px;top:235px;font-size:11.67px;line-height:15px;color:#f4f4f4">0</div>
<div class="m" style="left:2487px;top:250px;font-size:11.67px;line-height:15px;color:#9a9a9a">IL</div>
<div class="m" style="left:2524px;top:250px;font-size:11.67px;line-height:15px;color:#f4f4f4">0</div>
<div class="m" style="left:2487px;top:265px;font-size:11.67px;line-height:15px;color:#9a9a9a">D</div>
<div class="m" style="left:2524px;top:265px;font-size:11.67px;line-height:15px;color:#f4f4f4">0</div>
<div class="m" style="left:2487px;top:280px;font-size:11.67px;line-height:15px;color:#9a9a9a">A</div>
<div class="m" style="left:2524px;top:280px;font-size:11.67px;line-height:15px;color:#f4f4f4">0</div>
<div class="m" style="left:2487px;top:295px;font-size:11.67px;line-height:15px;color:#9a9a9a">I</div>
<div class="m" style="left:2524px;top:295px;font-size:11.67px;line-height:15px;color:#f4f4f4">0</div>
<div class="m" style="left:2487px;top:310px;font-size:11.67px;line-height:15px;color:#9a9a9a">F</div>
<div class="m" style="left:2524px;top:310px;font-size:11.67px;line-height:15px;color:#f4f4f4">0</div>
<div class="m" style="left:2487px;top:325px;font-size:11.67px;line-height:15px;color:#9a9a9a">NRW</div>
<div class="m" style="left:2524px;top:325px;font-size:11.67px;line-height:15px;color:#f4f4f4">0</div>
<div class="m" style="left:2487px;top:340px;font-size:11.67px;line-height:15px;color:#9a9a9a">EL</div>
<div class="m" style="left:2524px;top:340px;font-size:11.67px;line-height:15px;color:#f4f4f4">0</div>
<div class="m" style="left:2487px;top:355px;font-size:11.67px;line-height:15px;color:#9a9a9a">SPSEL</div>
<div class="m" style="left:2524px;top:355px;font-size:11.67px;line-height:15px;color:#f4f4f4">0</div>
<svg style="position:absolute;left:1795px;top:447px" width="16" height="16" viewBox="0 0 16 16"><defs><linearGradient id="tb16" x1="0" x2="1"><stop offset="0" stop-color="#5ad8ff"/><stop offset="1" stop-color="#1a30d0"/></linearGradient><linearGradient id="bg16" x1="0" y1="0" x2="1" y2="1"><stop offset="0" stop-color="#d0f4ff"/><stop offset="1" stop-color="#ffffff"/></linearGradient></defs><rect x="1.5" y="0.5" width="14" height="15" fill="url(#bg16)" stroke="#2a78e8"/><rect x="2" y="1" width="13" height="2.5" fill="url(#tb16)"/><rect x="9.5" y="4.5" width="4" height="8" fill="#fff" stroke="#0a3a80"/><rect x="10.5" y="8" width="2" height="2.5" fill="none" stroke="#0a3a80" stroke-width="0.7"/><path d="M0.5 8.5h4l2 2v5h-6z" fill="#fff" stroke="#0a3a80"/><path d="M1.5 12h4M1.5 14h4" stroke="#0a3a80" stroke-width="0.8"/></svg>
<div class="t" style="left:1817px;top:448px;font-size:11px;line-height:15px;color:#ececec">Modules</div>
<div style="left:2449px;top:447px;width:32px;height:20px;background:#676767;border-radius:4px"></div>
<svg style="position:absolute;left:2460px;top:452px" width="10" height="10"><rect x="0.75" y="0.75" width="8.5" height="8.5" fill="none" stroke="#333" stroke-width="1.5"/><rect x="0" y="0" width="10" height="3" fill="#333"/></svg>
<div style="left:2487px;top:447px;width:32px;height:20px;background:#676767;border-radius:4px"></div>
<svg style="position:absolute;left:2498px;top:452px" width="10" height="10"><rect x="0.75" y="3.75" width="5.5" height="5.5" fill="none" stroke="#333" stroke-width="1.5"/><path d="M3.5 3V0.75H9.25V6.5H7" fill="none" stroke="#333" stroke-width="1.5"/></svg>
<div style="left:2525px;top:447px;width:32px;height:20px;background:#676767;border-radius:4px"></div>
<svg style="position:absolute;left:2536px;top:452px" width="10" height="10"><path d="M1 1l8 8M9 1l-8 8" stroke="#333" stroke-width="1.8"/></svg>
<div style="left:1792px;top:472px;width:767px;height:239px;background:#2b2b2b;border-top:1px solid #4a4a4a;border-left:1px solid #4a4a4a"></div>
<div style="left:1793px;top:473px;width:745px;height:29px;background:#444444"></div>
<div style="left:2154px;top:473px;width:1px;height:29px;background:#5a5a5a"></div>
<div style="left:2306px;top:473px;width:1px;height:29px;background:#5a5a5a"></div>
<div class="t" style="left:1797px;top:477px;font-size:11px;line-height:15px;color:#ececec">Path</div>
<div class="t" style="left:2158px;top:477px;font-size:11px;line-height:15px;color:#ececec">Base</div>
<div class="t" style="left:2311px;top:477px;font-size:11px;line-height:15px;color:#ececec">Size</div>
<div style="left:2538px;top:473px;width:21px;height:217px;background:#383838"></div>
<div style="left:2541px;top:476px;width:14px;height:20px;background:#5c5c5c;border-radius:7px"></div>
<div style="left:1793px;top:502px;width:745px;height:188px;overflow:hidden">
<svg style="position:absolute;left:4px;top:0px" width="16" height="15" viewBox="0 0 16 16"><defs><linearGradient id="tb17" x1="0" x2="1"><stop offset="0" stop-color="#5ad8ff"/><stop offset="1" stop-color="#1a30d0"/></linearGradient><linearGradient id="bg17" x1="0" y1="0" x2="1" y2="1"><stop offset="0" stop-color="#d0f4ff"/><stop offset="1" stop-color="#ffffff"/></linearGradient></defs><rect x="1.5" y="0.5" width="14" height="15" fill="url(#bg17)" stroke="#2a78e8"/><rect x="2" y="1" width="13" height="2.5" fill="url(#tb17)"/><rect x="9.5" y="4.5" width="4" height="8" fill="#fff" stroke="#0a3a80"/><rect x="10.5" y="8" width="2" height="2.5" fill="none" stroke="#0a3a80" stroke-width="0.7"/><path d="M0.5 8.5h4l2 2v5h-6z" fill="#fff" stroke="#0a3a80"/><path d="M1.5 12h4M1.5 14h4" stroke="#0a3a80" stroke-width="0.8"/></svg>
<div class="t" style="left:25px;top:0px;font-size:11px;line-height:15px;color:#e8e8e8">&lt;GDB remote process&gt;</div>
<div class="t" style="left:363px;top:0px;font-size:11px;line-height:15px;color:#e8e8e8">0000000101008000</div>
<div class="t" style="left:516px;top:0px;font-size:11px;line-height:15px;color:#e8e8e8">0000000004804000</div>
<svg style="position:absolute;left:4px;top:15px" width="16" height="15" viewBox="0 0 16 16"><defs><linearGradient id="tb18" x1="0" x2="1"><stop offset="0" stop-color="#5ad8ff"/><stop offset="1" stop-color="#1a30d0"/></linearGradient><linearGradient id="bg18" x1="0" y1="0" x2="1" y2="1"><stop offset="0" stop-color="#d0f4ff"/><stop offset="1" stop-color="#ffffff"/></linearGradient></defs><rect x="1.5" y="0.5" width="14" height="15" fill="url(#bg18)" stroke="#2a78e8"/><rect x="2" y="1" width="13" height="2.5" fill="url(#tb18)"/><rect x="9.5" y="4.5" width="4" height="8" fill="#fff" stroke="#0a3a80"/><rect x="10.5" y="8" width="2" height="2.5" fill="none" stroke="#0a3a80" stroke-width="0.7"/><path d="M0.5 8.5h4l2 2v5h-6z" fill="#fff" stroke="#0a3a80"/><path d="M1.5 12h4M1.5 14h4" stroke="#0a3a80" stroke-width="0.8"/></svg>
<div class="t" style="left:25px;top:15px;font-size:11px;line-height:15px;color:#e8e8e8">/private/var/containers/Bundle/Application/6114785E-3B7D-454D-...</div>
<div class="t" style="left:363px;top:15px;font-size:11px;line-height:15px;color:#e8e8e8">0000000105964000</div>
<div class="t" style="left:516px;top:15px;font-size:11px;line-height:15px;color:#e8e8e8">0000000000058000</div>
<svg style="position:absolute;left:4px;top:30px" width="16" height="15" viewBox="0 0 16 16"><defs><linearGradient id="tb19" x1="0" x2="1"><stop offset="0" stop-color="#5ad8ff"/><stop offset="1" stop-color="#1a30d0"/></linearGradient><linearGradient id="bg19" x1="0" y1="0" x2="1" y2="1"><stop offset="0" stop-color="#d0f4ff"/><stop offset="1" stop-color="#ffffff"/></linearGradient></defs><rect x="1.5" y="0.5" width="14" height="15" fill="url(#bg19)" stroke="#2a78e8"/><rect x="2" y="1" width="13" height="2.5" fill="url(#tb19)"/><rect x="9.5" y="4.5" width="4" height="8" fill="#fff" stroke="#0a3a80"/><rect x="10.5" y="8" width="2" height="2.5" fill="none" stroke="#0a3a80" stroke-width="0.7"/><path d="M0.5 8.5h4l2 2v5h-6z" fill="#fff" stroke="#0a3a80"/><path d="M1.5 12h4M1.5 14h4" stroke="#0a3a80" stroke-width="0.8"/></svg>
<div class="t" style="left:25px;top:30px;font-size:11px;line-height:15px;color:#e8e8e8">/private/var/containers/Bundle/Application/6114785E-3B7D-454D-...</div>
<div class="t" style="left:363px;top:30px;font-size:11px;line-height:15px;color:#e8e8e8">0000000105A0C000</div>
<div class="t" style="left:516px;top:30px;font-size:11px;line-height:15px;color:#e8e8e8">0000000000100000</div>
<svg style="position:absolute;left:4px;top:45px" width="16" height="15" viewBox="0 0 16 16"><defs><linearGradient id="tb20" x1="0" x2="1"><stop offset="0" stop-color="#5ad8ff"/><stop offset="1" stop-color="#1a30d0"/></linearGradient><linearGradient id="bg20" x1="0" y1="0" x2="1" y2="1"><stop offset="0" stop-color="#d0f4ff"/><stop offset="1" stop-color="#ffffff"/></linearGradient></defs><rect x="1.5" y="0.5" width="14" height="15" fill="url(#bg20)" stroke="#2a78e8"/><rect x="2" y="1" width="13" height="2.5" fill="url(#tb20)"/><rect x="9.5" y="4.5" width="4" height="8" fill="#fff" stroke="#0a3a80"/><rect x="10.5" y="8" width="2" height="2.5" fill="none" stroke="#0a3a80" stroke-width="0.7"/><path d="M0.5 8.5h4l2 2v5h-6z" fill="#fff" stroke="#0a3a80"/><path d="M1.5 12h4M1.5 14h4" stroke="#0a3a80" stroke-width="0.8"/></svg>
<div class="t" style="left:25px;top:45px;font-size:11px;line-height:15px;color:#e8e8e8">/private/var/containers/Bundle/Application/6114785E-3B7D-454D-...</div>
<div class="t" style="left:363px;top:45px;font-size:11px;line-height:15px;color:#e8e8e8">0000000105B0C000</div>
<div class="t" style="left:516px;top:45px;font-size:11px;line-height:15px;color:#e8e8e8">00000000000C4000</div>
<svg style="position:absolute;left:4px;top:60px" width="16" height="15" viewBox="0 0 16 16"><defs><linearGradient id="tb21" x1="0" x2="1"><stop offset="0" stop-color="#5ad8ff"/><stop offset="1" stop-color="#1a30d0"/></linearGradient><linearGradient id="bg21" x1="0" y1="0" x2="1" y2="1"><stop offset="0" stop-color="#d0f4ff"/><stop offset="1" stop-color="#ffffff"/></linearGradient></defs><rect x="1.5" y="0.5" width="14" height="15" fill="url(#bg21)" stroke="#2a78e8"/><rect x="2" y="1" width="13" height="2.5" fill="url(#tb21)"/><rect x="9.5" y="4.5" width="4" height="8" fill="#fff" stroke="#0a3a80"/><rect x="10.5" y="8" width="2" height="2.5" fill="none" stroke="#0a3a80" stroke-width="0.7"/><path d="M0.5 8.5h4l2 2v5h-6z" fill="#fff" stroke="#0a3a80"/><path d="M1.5 12h4M1.5 14h4" stroke="#0a3a80" stroke-width="0.8"/></svg>
<div class="t" style="left:25px;top:60px;font-size:11px;line-height:15px;color:#e8e8e8">/usr/lib/dyld</div>
<div class="t" style="left:363px;top:60px;font-size:11px;line-height:15px;color:#e8e8e8">0000000105BFC000</div>
<div class="t" style="left:516px;top:60px;font-size:11px;line-height:15px;color:#e8e8e8">00000000000A4000</div>
<svg style="position:absolute;left:4px;top:75px" width="16" height="15" viewBox="0 0 16 16"><defs><linearGradient id="tb22" x1="0" x2="1"><stop offset="0" stop-color="#5ad8ff"/><stop offset="1" stop-color="#1a30d0"/></linearGradient><linearGradient id="bg22" x1="0" y1="0" x2="1" y2="1"><stop offset="0" stop-color="#d0f4ff"/><stop offset="1" stop-color="#ffffff"/></linearGradient></defs><rect x="1.5" y="0.5" width="14" height="15" fill="url(#bg22)" stroke="#2a78e8"/><rect x="2" y="1" width="13" height="2.5" fill="url(#tb22)"/><rect x="9.5" y="4.5" width="4" height="8" fill="#fff" stroke="#0a3a80"/><rect x="10.5" y="8" width="2" height="2.5" fill="none" stroke="#0a3a80" stroke-width="0.7"/><path d="M0.5 8.5h4l2 2v5h-6z" fill="#fff" stroke="#0a3a80"/><path d="M1.5 12h4M1.5 14h4" stroke="#0a3a80" stroke-width="0.8"/></svg>
<div class="t" style="left:25px;top:75px;font-size:11px;line-height:15px;color:#e8e8e8">/private/var/containers/Bundle/Application/6114785E-3B7D-454D-...</div>
<div class="t" style="left:363px;top:75px;font-size:11px;line-height:15px;color:#e8e8e8">0000000105CA0000</div>
<div class="t" style="left:516px;top:75px;font-size:11px;line-height:15px;color:#e8e8e8">0000000000188000</div>
<svg style="position:absolute;left:4px;top:90px" width="16" height="15" viewBox="0 0 16 16"><defs><linearGradient id="tb23" x1="0" x2="1"><stop offset="0" stop-color="#5ad8ff"/><stop offset="1" stop-color="#1a30d0"/></linearGradient><linearGradient id="bg23" x1="0" y1="0" x2="1" y2="1"><stop offset="0" stop-color="#d0f4ff"/><stop offset="1" stop-color="#ffffff"/></linearGradient></defs><rect x="1.5" y="0.5" width="14" height="15" fill="url(#bg23)" stroke="#2a78e8"/><rect x="2" y="1" width="13" height="2.5" fill="url(#tb23)"/><rect x="9.5" y="4.5" width="4" height="8" fill="#fff" stroke="#0a3a80"/><rect x="10.5" y="8" width="2" height="2.5" fill="none" stroke="#0a3a80" stroke-width="0.7"/><path d="M0.5 8.5h4l2 2v5h-6z" fill="#fff" stroke="#0a3a80"/><path d="M1.5 12h4M1.5 14h4" stroke="#0a3a80" stroke-width="0.8"/></svg>
<div class="t" style="left:25px;top:90px;font-size:11px;line-height:15px;color:#e8e8e8">/private/var/containers/Bundle/Application/6114785E-3B7D-454D-...</div>
<div class="t" style="left:363px;top:90px;font-size:11px;line-height:15px;color:#e8e8e8">0000000105EC0000</div>
<div class="t" style="left:516px;top:90px;font-size:11px;line-height:15px;color:#e8e8e8">0000000000098000</div>
<svg style="position:absolute;left:4px;top:105px" width="16" height="15" viewBox="0 0 16 16"><defs><linearGradient id="tb24" x1="0" x2="1"><stop offset="0" stop-color="#5ad8ff"/><stop offset="1" stop-color="#1a30d0"/></linearGradient><linearGradient id="bg24" x1="0" y1="0" x2="1" y2="1"><stop offset="0" stop-color="#d0f4ff"/><stop offset="1" stop-color="#ffffff"/></linearGradient></defs><rect x="1.5" y="0.5" width="14" height="15" fill="url(#bg24)" stroke="#2a78e8"/><rect x="2" y="1" width="13" height="2.5" fill="url(#tb24)"/><rect x="9.5" y="4.5" width="4" height="8" fill="#fff" stroke="#0a3a80"/><rect x="10.5" y="8" width="2" height="2.5" fill="none" stroke="#0a3a80" stroke-width="0.7"/><path d="M0.5 8.5h4l2 2v5h-6z" fill="#fff" stroke="#0a3a80"/><path d="M1.5 12h4M1.5 14h4" stroke="#0a3a80" stroke-width="0.8"/></svg>
<div class="t" style="left:25px;top:105px;font-size:11px;line-height:15px;color:#e8e8e8">/private/var/containers/Bundle/Application/6114785E-3B7D-454D-...</div>
<div class="t" style="left:363px;top:105px;font-size:11px;line-height:15px;color:#e8e8e8">0000000105F70000</div>
<div class="t" style="left:516px;top:105px;font-size:11px;line-height:15px;color:#e8e8e8">0000000000150000</div>
<svg style="position:absolute;left:4px;top:120px" width="16" height="15" viewBox="0 0 16 16"><defs><linearGradient id="tb25" x1="0" x2="1"><stop offset="0" stop-color="#5ad8ff"/><stop offset="1" stop-color="#1a30d0"/></linearGradient><linearGradient id="bg25" x1="0" y1="0" x2="1" y2="1"><stop offset="0" stop-color="#d0f4ff"/><stop offset="1" stop-color="#ffffff"/></linearGradient></defs><rect x="1.5" y="0.5" width="14" height="15" fill="url(#bg25)" stroke="#2a78e8"/><rect x="2" y="1" width="13" height="2.5" fill="url(#tb25)"/><rect x="9.5" y="4.5" width="4" height="8" fill="#fff" stroke="#0a3a80"/><rect x="10.5" y="8" width="2" height="2.5" fill="none" stroke="#0a3a80" stroke-width="0.7"/><path d="M0.5 8.5h4l2 2v5h-6z" fill="#fff" stroke="#0a3a80"/><path d="M1.5 12h4M1.5 14h4" stroke="#0a3a80" stroke-width="0.8"/></svg>
<div class="t" style="left:25px;top:120px;font-size:11px;line-height:15px;color:#e8e8e8">/private/var/containers/Bundle/Application/6114785E-3B7D-454D-...</div>
<div class="t" style="left:363px;top:120px;font-size:11px;line-height:15px;color:#e8e8e8">00000001060C0000</div>
<div class="t" style="left:516px;top:120px;font-size:11px;line-height:15px;color:#e8e8e8">0000000000128000</div>
<svg style="position:absolute;left:4px;top:135px" width="16" height="15" viewBox="0 0 16 16"><defs><linearGradient id="tb26" x1="0" x2="1"><stop offset="0" stop-color="#5ad8ff"/><stop offset="1" stop-color="#1a30d0"/></linearGradient><linearGradient id="bg26" x1="0" y1="0" x2="1" y2="1"><stop offset="0" stop-color="#d0f4ff"/><stop offset="1" stop-color="#ffffff"/></linearGradient></defs><rect x="1.5" y="0.5" width="14" height="15" fill="url(#bg26)" stroke="#2a78e8"/><rect x="2" y="1" width="13" height="2.5" fill="url(#tb26)"/><rect x="9.5" y="4.5" width="4" height="8" fill="#fff" stroke="#0a3a80"/><rect x="10.5" y="8" width="2" height="2.5" fill="none" stroke="#0a3a80" stroke-width="0.7"/><path d="M0.5 8.5h4l2 2v5h-6z" fill="#fff" stroke="#0a3a80"/><path d="M1.5 12h4M1.5 14h4" stroke="#0a3a80" stroke-width="0.8"/></svg>
<div class="t" style="left:25px;top:135px;font-size:11px;line-height:15px;color:#e8e8e8">/private/var/containers/Bundle/Application/6114785E-3B7D-454D-...</div>
<div class="t" style="left:363px;top:135px;font-size:11px;line-height:15px;color:#e8e8e8">0000000106290000</div>
<div class="t" style="left:516px;top:135px;font-size:11px;line-height:15px;color:#e8e8e8">00000000001D0000</div>
<svg style="position:absolute;left:4px;top:150px" width="16" height="15" viewBox="0 0 16 16"><defs><linearGradient id="tb27" x1="0" x2="1"><stop offset="0" stop-color="#5ad8ff"/><stop offset="1" stop-color="#1a30d0"/></linearGradient><linearGradient id="bg27" x1="0" y1="0" x2="1" y2="1"><stop offset="0" stop-color="#d0f4ff"/><stop offset="1" stop-color="#ffffff"/></linearGradient></defs><rect x="1.5" y="0.5" width="14" height="15" fill="url(#bg27)" stroke="#2a78e8"/><rect x="2" y="1" width="13" height="2.5" fill="url(#tb27)"/><rect x="9.5" y="4.5" width="4" height="8" fill="#fff" stroke="#0a3a80"/><rect x="10.5" y="8" width="2" height="2.5" fill="none" stroke="#0a3a80" stroke-width="0.7"/><path d="M0.5 8.5h4l2 2v5h-6z" fill="#fff" stroke="#0a3a80"/><path d="M1.5 12h4M1.5 14h4" stroke="#0a3a80" stroke-width="0.8"/></svg>
<div class="t" style="left:25px;top:150px;font-size:11px;line-height:15px;color:#e8e8e8">/private/var/containers/Bundle/Application/6114785E-3B7D-454D-...</div>
<div class="t" style="left:363px;top:150px;font-size:11px;line-height:15px;color:#e8e8e8">0000000106590000</div>
<div class="t" style="left:516px;top:150px;font-size:11px;line-height:15px;color:#e8e8e8">0000000000778000</div>
<svg style="position:absolute;left:4px;top:165px" width="16" height="15" viewBox="0 0 16 16"><defs><linearGradient id="tb28" x1="0" x2="1"><stop offset="0" stop-color="#5ad8ff"/><stop offset="1" stop-color="#1a30d0"/></linearGradient><linearGradient id="bg28" x1="0" y1="0" x2="1" y2="1"><stop offset="0" stop-color="#d0f4ff"/><stop offset="1" stop-color="#ffffff"/></linearGradient></defs><rect x="1.5" y="0.5" width="14" height="15" fill="url(#bg28)" stroke="#2a78e8"/><rect x="2" y="1" width="13" height="2.5" fill="url(#tb28)"/><rect x="9.5" y="4.5" width="4" height="8" fill="#fff" stroke="#0a3a80"/><rect x="10.5" y="8" width="2" height="2.5" fill="none" stroke="#0a3a80" stroke-width="0.7"/><path d="M0.5 8.5h4l2 2v5h-6z" fill="#fff" stroke="#0a3a80"/><path d="M1.5 12h4M1.5 14h4" stroke="#0a3a80" stroke-width="0.8"/></svg>
<div class="t" style="left:25px;top:165px;font-size:11px;line-height:15px;color:#e8e8e8">/private/var/containers/Bundle/Application/6114785E-3B7D-454D-...</div>
<div class="t" style="left:363px;top:165px;font-size:11px;line-height:15px;color:#e8e8e8">0000000106D08000</div>
<div class="t" style="left:516px;top:165px;font-size:11px;line-height:15px;color:#e8e8e8">00000000004C4000</div>
<svg style="position:absolute;left:4px;top:180px" width="16" height="15" viewBox="0 0 16 16"><defs><linearGradient id="tb29" x1="0" x2="1"><stop offset="0" stop-color="#5ad8ff"/><stop offset="1" stop-color="#1a30d0"/></linearGradient><linearGradient id="bg29" x1="0" y1="0" x2="1" y2="1"><stop offset="0" stop-color="#d0f4ff"/><stop offset="1" stop-color="#ffffff"/></linearGradient></defs><rect x="1.5" y="0.5" width="14" height="15" fill="url(#bg29)" stroke="#2a78e8"/><rect x="2" y="1" width="13" height="2.5" fill="url(#tb29)"/><rect x="9.5" y="4.5" width="4" height="8" fill="#fff" stroke="#0a3a80"/><rect x="10.5" y="8" width="2" height="2.5" fill="none" stroke="#0a3a80" stroke-width="0.7"/><path d="M0.5 8.5h4l2 2v5h-6z" fill="#fff" stroke="#0a3a80"/><path d="M1.5 12h4M1.5 14h4" stroke="#0a3a80" stroke-width="0.8"/></svg>
<div class="t" style="left:25px;top:180px;font-size:11px;line-height:15px;color:#e8e8e8">/private/var/containers/Bundle/Application/6114785E-3B7D-454D-...</div>
<div class="t" style="left:363px;top:180px;font-size:11px;line-height:15px;color:#e8e8e8">00000001071CC000</div>
<div class="t" style="left:516px;top:180px;font-size:11px;line-height:15px;color:#e8e8e8">000000000010C000</div>
</div>
<div style="left:1793px;top:690px;width:745px;height:20px;background:#353535"></div>
<div style="left:1796px;top:693px;width:720px;height:14px;background:#5a5a5a;border-radius:7px"></div>
<div style="left:2538px;top:690px;width:21px;height:20px;background:#2e2e2e"></div>
<div style="left:1788px;top:710px;width:771px;height:1px;background:#555"></div>
<svg style="position:absolute;left:1795px;top:741px" width="16" height="16" viewBox="0 0 16 16"><defs><linearGradient id="tb30" x1="0" x2="1"><stop offset="0" stop-color="#5ad8ff"/><stop offset="1" stop-color="#1a30d0"/></linearGradient><linearGradient id="bg30" x1="0" y1="0" x2="1" y2="1"><stop offset="0" stop-color="#d0f4ff"/><stop offset="1" stop-color="#ffffff"/></linearGradient></defs><rect x="0.5" y="0.5" width="15" height="15" fill="url(#bg30)" stroke="#2a78e8"/><rect x="1" y="1" width="14" height="2.5" fill="url(#tb30)"/><rect x="3.5" y="5.5" width="6" height="6" fill="none" stroke="#0a3a80"/><rect x="6.5" y="8.5" width="6" height="5" fill="#fff" stroke="#0a3a80"/></svg>
<div class="t" style="left:1817px;top:741px;font-size:11px;line-height:15px;color:#ececec">Threads</div>
<div style="left:2449px;top:740px;width:32px;height:20px;background:#676767;border-radius:4px"></div>
<svg style="position:absolute;left:2460px;top:745px" width="10" height="10"><rect x="0.75" y="0.75" width="8.5" height="8.5" fill="none" stroke="#333" stroke-width="1.5"/><rect x="0" y="0" width="10" height="3" fill="#333"/></svg>
<div style="left:2487px;top:740px;width:32px;height:20px;background:#676767;border-radius:4px"></div>
<svg style="position:absolute;left:2498px;top:745px" width="10" height="10"><rect x="0.75" y="3.75" width="5.5" height="5.5" fill="none" stroke="#333" stroke-width="1.5"/><path d="M3.5 3V0.75H9.25V6.5H7" fill="none" stroke="#333" stroke-width="1.5"/></svg>
<div style="left:2525px;top:740px;width:32px;height:20px;background:#676767;border-radius:4px"></div>
<svg style="position:absolute;left:2536px;top:745px" width="10" height="10"><path d="M1 1l8 8M9 1l-8 8" stroke="#333" stroke-width="1.8"/></svg>
<div style="left:1792px;top:765px;width:767px;height:259px;background:#2b2b2b;border-left:1px solid #4a4a4a;border-bottom:1px solid #4a4a4a"></div>
<div style="left:1793px;top:765px;width:766px;height:30px;background:#444444"></div>
<div style="left:1860px;top:765px;width:1px;height:30px;background:#5a5a5a"></div>
<div style="left:1909px;top:765px;width:1px;height:30px;background:#5a5a5a"></div>
<div style="left:2002px;top:765px;width:1px;height:30px;background:#5a5a5a"></div>
<div class="t" style="left:1797px;top:770px;font-size:11px;line-height:15px;color:#ececec">Decimal</div>
<div class="t" style="left:1864px;top:770px;font-size:11px;line-height:15px;color:#ececec">Hex</div>
<div class="t" style="left:1913px;top:770px;font-size:11px;line-height:15px;color:#ececec">State</div>
<div class="t" style="left:2006px;top:770px;font-size:11px;line-height:15px;color:#ececec">Name</div>
<svg style="position:absolute;left:1796px;top:795px" width="16" height="15" viewBox="0 0 16 16"><defs><linearGradient id="tb31" x1="0" x2="1"><stop offset="0" stop-color="#5ad8ff"/><stop offset="1" stop-color="#1a30d0"/></linearGradient><linearGradient id="bg31" x1="0" y1="0" x2="1" y2="1"><stop offset="0" stop-color="#d0f4ff"/><stop offset="1" stop-color="#ffffff"/></linearGradient></defs><rect x="0.5" y="0.5" width="15" height="15" fill="url(#bg31)" stroke="#2a78e8"/><rect x="1" y="1" width="14" height="2.5" fill="url(#tb31)"/><rect x="3.5" y="5.5" width="6" height="6" fill="none" stroke="#0a3a80"/><rect x="6.5" y="8.5" width="6" height="5" fill="#fff" stroke="#0a3a80"/></svg>
<div class="t" style="left:1818px;top:795px;font-size:11px;line-height:15px;color:#e8e8e8;font-weight:bold;">253...</div>
<div class="t" style="left:1863px;top:795px;font-size:11px;line-height:15px;color:#e8e8e8;font-weight:bold;">26A3...</div>
<div class="t" style="left:1912px;top:795px;font-size:11px;line-height:15px;color:#e8e8e8;font-weight:bold;">Ready</div>
<div class="t" style="left:2004px;top:795px;font-size:10px;line-height:15px;color:#e8e8e8;font-weight:bold;">FFFFFFFFFFFFFFFF</div>
<svg style="position:absolute;left:1796px;top:810px" width="16" height="15" viewBox="0 0 16 16"><defs><linearGradient id="tb32" x1="0" x2="1"><stop offset="0" stop-color="#5ad8ff"/><stop offset="1" stop-color="#1a30d0"/></linearGradient><linearGradient id="bg32" x1="0" y1="0" x2="1" y2="1"><stop offset="0" stop-color="#d0f4ff"/><stop offset="1" stop-color="#ffffff"/></linearGradient></defs><rect x="0.5" y="0.5" width="15" height="15" fill="url(#bg32)" stroke="#2a78e8"/><rect x="1" y="1" width="14" height="2.5" fill="url(#tb32)"/><rect x="3.5" y="5.5" width="6" height="6" fill="none" stroke="#0a3a80"/><rect x="6.5" y="8.5" width="6" height="5" fill="#fff" stroke="#0a3a80"/></svg>
<div class="t" style="left:1818px;top:810px;font-size:11px;line-height:15px;color:#e8e8e8;">2532...</div>
<div class="t" style="left:1863px;top:810px;font-size:11px;line-height:15px;color:#e8e8e8;">26A3FB</div>
<div class="t" style="left:1912px;top:810px;font-size:11px;line-height:15px;color:#e8e8e8;">Ready</div>
<div class="t" style="left:2004px;top:810px;font-size:10px;line-height:15px;color:#e8e8e8;">FFFFFFFFFFFFFFFF</div>
<svg style="position:absolute;left:1796px;top:825px" width="16" height="15" viewBox="0 0 16 16"><defs><linearGradient id="tb33" x1="0" x2="1"><stop offset="0" stop-color="#5ad8ff"/><stop offset="1" stop-color="#1a30d0"/></linearGradient><linearGradient id="bg33" x1="0" y1="0" x2="1" y2="1"><stop offset="0" stop-color="#d0f4ff"/><stop offset="1" stop-color="#ffffff"/></linearGradient></defs><rect x="0.5" y="0.5" width="15" height="15" fill="url(#bg33)" stroke="#2a78e8"/><rect x="1" y="1" width="14" height="2.5" fill="url(#tb33)"/><rect x="3.5" y="5.5" width="6" height="6" fill="none" stroke="#0a3a80"/><rect x="6.5" y="8.5" width="6" height="5" fill="#fff" stroke="#0a3a80"/></svg>
<div class="t" style="left:1818px;top:825px;font-size:11px;line-height:15px;color:#e8e8e8;">2532...</div>
<div class="t" style="left:1863px;top:825px;font-size:11px;line-height:15px;color:#e8e8e8;">26A3FA</div>
<div class="t" style="left:1912px;top:825px;font-size:11px;line-height:15px;color:#e8e8e8;">Ready</div>
<div class="t" style="left:2004px;top:825px;font-size:10px;line-height:15px;color:#e8e8e8;">FFFFFFFFFFFFFFFF</div>
<div style="left:0px;top:1392px;width:2559px;height:47px;background:linear-gradient(90deg,#221e1e 0px,#2e1f1e 75px,#271f1c 110px,#1f2a18 145px,#1e2c18 300px,#1f2818 430px,#1f231c 540px,#1f1f1f 700px,#1f1f1f 1640px,#241d1c 1780px,#1f1e1d 1950px,#1f1e1c 2559px)"></div>
<div style="left:0px;top:1392px;width:2559px;height:1px;background:#3a3a3a"></div>
<svg style="position:absolute;left:873px;top:1404px" width="24" height="24" viewBox="0 0 24 24"><defs><linearGradient id="wl" x1="0" y1="0" x2="1" y2="1"><stop offset="0" stop-color="#7ad8ff"/><stop offset="1" stop-color="#1090f0"/></linearGradient></defs><rect x="0" y="0" width="11" height="11" fill="url(#wl)"/><rect x="12" y="0" width="11" height="11" fill="url(#wl)"/><rect x="0" y="12" width="11" height="11" fill="url(#wl)"/><rect x="12" y="12" width="11" height="11" fill="url(#wl)"/></svg>
<svg style="position:absolute;left:917px;top:1404px" width="24" height="24" viewBox="0 0 24 24"><rect x="0" y="7" width="16" height="15" rx="2" fill="#555"/><rect x="6" y="1" width="17" height="15" rx="2" fill="#e8e8e8"/><rect x="6" y="7" width="10" height="9" fill="#aaa"/></svg>
<svg style="position:absolute;left:961px;top:1404px" width="24" height="24" viewBox="0 0 24 24"><circle cx="12" cy="12" r="9" fill="#7a8a9a"/><path d="M12 0v24M0 12h24M3.5 3.5l17 17M20.5 3.5l-17 17" stroke="#7a8a9a" stroke-width="4"/><circle cx="12" cy="12" r="6" fill="#e8eef4"/><circle cx="12" cy="12" r="4" fill="#1a5ab0"/></svg>
<svg style="position:absolute;left:1005px;top:1404px" width="24" height="24" viewBox="0 0 24 24"><defs><linearGradient id="edg" x1="1" y1="0" x2="0" y2="1"><stop offset="0" stop-color="#50e070"/><stop offset="0.45" stop-color="#20a0e0"/><stop offset="1" stop-color="#0a50b0"/></linearGradient></defs><circle cx="12" cy="12" r="11.5" fill="url(#edg)"/><path d="M2 15c2 6 9 9 15 6-5 1-10-2-9-7 1-3 5-4 7-2-2-5-10-5-13 3z" fill="#0a3a90"/><ellipse cx="13" cy="13" rx="3.5" ry="2.5" fill="#1a6ad0"/></svg>
<svg style="position:absolute;left:1049px;top:1404px" width="24" height="24" viewBox="0 0 24 24"><path d="M0 3h9l2 2h13v3H0z" fill="#e8a810"/><rect x="0" y="6" width="24" height="17" fill="#f8c830"/><rect x="6" y="15" width="12" height="8" rx="2" fill="#1a80d8"/></svg>
<svg style="position:absolute;left:1093px;top:1404px" width="24" height="24" viewBox="0 0 24 24"><circle cx="12" cy="12" r="12" fill="#5865f2"/><path d="M6 8q6-3 12 0l2 8q-2 2-4 2l-1-2q-3 1-6 0l-1 2q-2 0-4-2z" fill="#fff"/><circle cx="9.5" cy="12.5" r="1.5" fill="#5865f2"/><circle cx="14.5" cy="12.5" r="1.5" fill="#5865f2"/></svg>
<svg style="position:absolute;left:1137px;top:1404px" width="24" height="24" viewBox="0 0 24 24"><circle cx="12" cy="12" r="12" fill="#1a2a5a"/><circle cx="15" cy="9" r="4.5" fill="none" stroke="#fff" stroke-width="2"/><path d="M1 13l8 4 5-5" stroke="#fff" stroke-width="3" fill="none"/><circle cx="8" cy="16" r="3" fill="#fff"/></svg>
<svg style="position:absolute;left:1181px;top:1404px" width="24" height="24" viewBox="0 0 24 24"><circle cx="12" cy="12" r="12" fill="#1ed760"/><path d="M5 8.5q7-2 14 1.5M6 12.5q6-1.5 11.5 1M7 16q5-1 9 1" stroke="#111" stroke-width="2.2" fill="none" stroke-linecap="round"/></svg>
<svg style="position:absolute;left:1225px;top:1404px" width="24" height="24" viewBox="0 0 24 24"><rect x="2" y="1" width="17" height="22" fill="#e8e8d0"/><rect x="3" y="12" width="15" height="10" fill="#70c020"/><path d="M6 5v12M9 8h3" stroke="#222" stroke-width="1.5"/><path d="M13 17L22 3" stroke="#f0a020" stroke-width="2.5"/></svg>
<svg style="position:absolute;left:1269px;top:1404px" width="24" height="24" viewBox="0 0 24 24"><rect x="0" y="0" width="24" height="24" fill="#b00000"/><text x="12" y="19" text-anchor="middle" font-family="Liberation Sans" font-size="17" font-weight="bold" font-style="italic" fill="#fff">Fz</text></svg>
<svg style="position:absolute;left:1313px;top:1404px" width="24" height="24" viewBox="0 0 24 24"><path d="M1 3h22L12 22z" fill="#8a6af0"/><path d="M5 5h15L12 19z" fill="#50e0d0" opacity="0.8"/></svg>
<svg style="position:absolute;left:1357px;top:1404px" width="24" height="24" viewBox="0 0 24 24"><path d="M17 0l7 3v18l-7 3L6 14l-4 3-2-1V8l2-1 4 3L17 0zm0 6l-6 6 6 6z" fill="#1a90e8"/></svg>
<svg style="position:absolute;left:1401px;top:1404px" width="24" height="24" viewBox="0 0 24 24"><path d="M17 0l7 3v18l-7 3L6 14l-4 3-2-1V8l2-1 4 3L17 0zm0 6l-6 6 6 6z" fill="#9060d0"/></svg>
<svg style="position:absolute;left:1445px;top:1404px" width="24" height="24" viewBox="0 0 24 24"><rect x="7" y="1" width="17" height="22" rx="1" fill="#21a366"/><path d="M7 8h17M7 15h17M15 1v22" stroke="#107040" stroke-width="1"/><rect x="0" y="5" width="13" height="14" rx="1" fill="#107c41"/><text x="6.5" y="16" text-anchor="middle" font-family="Liberation Sans" font-size="10" font-weight="bold" fill="#fff">X</text></svg>
<svg style="position:absolute;left:1489px;top:1404px" width="24" height="24" viewBox="0 0 24 24"><rect x="0" y="2" width="24" height="20" rx="2" fill="#3a3a3a" stroke="#888"/><rect x="0" y="2" width="24" height="4" fill="#777"/><path d="M4 10l4 3-4 3" stroke="#fff" stroke-width="1.6" fill="none"/><path d="M10 17h7" stroke="#fff" stroke-width="1.6"/></svg>
<svg style="position:absolute;left:1533px;top:1404px" width="24" height="24" viewBox="0 0 24 24"><circle cx="12" cy="12" r="12" fill="#7a3ca8"/><circle cx="12" cy="12" r="9" fill="none" stroke="#f4eefa" stroke-width="1.6"/><path d="M8 19v-3q0-1.5 1.5-2.2Q6 13 6 9.5q0-1.8 1-2.8-.3-1.5.2-2.5 1.3 0 2.6 1.1 2.2-.6 4.4 0 1.3-1.1 2.6-1.1.5 1 .2 2.5 1 1 1 2.8 0 3.5-3.5 4.3Q16 14.5 16 16v3" fill="#f4eefa"/></svg>
<svg style="position:absolute;left:1578px;top:1404px" width="24" height="24" viewBox="0 0 24 24"><rect x="0" y="1" width="22" height="22" rx="4" fill="#111"/><path d="M3 11l3 3 3-4 3 4 3-4 3 4 2-2" stroke="#30d0c0" stroke-width="1.6" fill="none"/></svg>
<svg style="position:absolute;left:1621px;top:1404px" width="24" height="24" viewBox="0 0 24 24"><path d="M3 14a9 9 0 0 1 18 0" stroke="#1030e0" stroke-width="3" fill="none"/><rect x="0" y="12" width="5" height="9" rx="2" fill="#1030e0"/><rect x="19" y="12" width="5" height="9" rx="2" fill="#1030e0"/><path d="M5 15h14" stroke="#f0a000" stroke-width="6"/><path d="M5 15h14" stroke="#e02000" stroke-width="1.5"/></svg>
<div style="left:1657px;top:1396px;width:39px;height:40px;background:#2e2e2e;border-radius:6px;border:1px solid #3c3c3c"></div>
<svg style="position:absolute;left:1665px;top:1404px" width="24" height="24" viewBox="0 0 24 24"><ellipse cx="14" cy="8.5" rx="8" ry="7" fill="#1c100c"/><ellipse cx="19" cy="12" rx="4.5" ry="6" fill="#1c100c"/><path d="M3 24q9-4 19 0z" fill="#e6d2bc"/><rect x="8" y="16" width="6" height="7" fill="#dcc0a8"/><ellipse cx="9" cy="12" rx="5" ry="6.8" fill="#e4c8aa"/><path d="M5 10q2-6 8-6-4 2-5 6z" fill="#1c100c"/><path d="M6.5 16.5q1.5 0.8 2.5 0" stroke="#b04030" stroke-width="1"/><text x="9.5" y="23" font-family="Liberation Sans" font-size="11" font-weight="bold" fill="#e01a08" stroke="#f04020" stroke-width="0.3">64</text></svg>
<div style="left:1669px;top:1433px;width:17px;height:3px;background:#4cc2ff;border-radius:2px"></div>
<div style="left:1014px;top:1433px;width:6px;height:3px;background:#9a9a9a;border-radius:2px"></div>
<div style="left:1058px;top:1433px;width:6px;height:3px;background:#9a9a9a;border-radius:2px"></div>
<div style="left:1102px;top:1433px;width:6px;height:3px;background:#9a9a9a;border-radius:2px"></div>
<div style="left:1146px;top:1433px;width:6px;height:3px;background:#9a9a9a;border-radius:2px"></div>
<div style="left:1190px;top:1433px;width:6px;height:3px;background:#9a9a9a;border-radius:2px"></div>
<div style="left:1234px;top:1433px;width:6px;height:3px;background:#9a9a9a;border-radius:2px"></div>
<div style="left:1278px;top:1433px;width:6px;height:3px;background:#9a9a9a;border-radius:2px"></div>
<div style="left:1366px;top:1433px;width:6px;height:3px;background:#9a9a9a;border-radius:2px"></div>
<div style="left:1498px;top:1433px;width:6px;height:3px;background:#9a9a9a;border-radius:2px"></div>
<svg style="position:absolute;left:2193px;top:1411px" width="12" height="8" viewBox="0 0 12 8"><path d="M1 7l5-5 5 5" stroke="#fff" stroke-width="1.4" fill="none"/></svg>
<svg style="position:absolute;left:2223px;top:1407px" width="17" height="19" viewBox="0 0 17 19"><path d="M7 0l7 3v6c0 5-3 8-7 9-4-1-7-4-7-9V3z" fill="#1a8ad8"/><circle cx="12" cy="14" r="4.5" fill="#20a030"/><path d="M10 14l1.5 1.5 3-3" stroke="#fff" stroke-width="1.3" fill="none"/></svg>
<svg style="position:absolute;left:2255px;top:1408px" width="16" height="16" viewBox="0 0 16 16"><circle cx="8" cy="8" r="8" fill="#2a4a8a"/><circle cx="10" cy="6" r="3" fill="none" stroke="#fff" stroke-width="1.5"/><path d="M1 9l5 2 3-3" stroke="#fff" stroke-width="2" fill="none"/></svg>
<svg style="position:absolute;left:2289px;top:1407px" width="15" height="19" viewBox="0 0 15 19"><rect x="2" y="5" width="7" height="13" fill="none" stroke="#fff" stroke-width="1.2"/><rect x="3.5" y="0.5" width="4" height="5" fill="none" stroke="#fff"/><path d="M9 16l2 2 4-4" stroke="#fff" fill="none"/></svg>
<svg style="position:absolute;left:2320px;top:1407px" width="13" height="18" viewBox="0 0 13 18"><rect x="0" y="0" width="13" height="18" rx="6" fill="#1a8ae8"/><path d="M4 5l5 5-3 3V4l3 3-5 5" stroke="#fff" stroke-width="1.2" fill="none"/></svg>
<svg style="position:absolute;left:2351px;top:1407px" width="16" height="18" viewBox="0 0 16 18"><path d="M6 1l2 8-8 3z" fill="#5a90f0"/><rect x="0" y="9" width="6" height="4" fill="#f07a10"/><rect x="9" y="9" width="7" height="4" fill="#20c020"/></svg>
<div class="t" style="left:2385px;top:1410px;font-size:11px;line-height:14px;color:#fff">DEU</div>
<svg style="position:absolute;left:2426px;top:1409px" width="17" height="14" viewBox="0 0 17 14"><path d="M1 5a11 11 0 0 1 15 0M3.5 7.5a7.5 7.5 0 0 1 10 0M6 10a4 4 0 0 1 5 0" stroke="#fff" stroke-width="1.3" fill="none"/><circle cx="8.5" cy="12.5" r="1.2" fill="#fff"/></svg>
<svg style="position:absolute;left:2450px;top:1409px" width="17" height="14" viewBox="0 0 17 14"><path d="M1 5h3l4-4v12l-4-4H1z" fill="none" stroke="#fff" stroke-width="1.1"/><path d="M10 4q2 3 0 6M12 2q4 5 0 10" stroke="#fff" stroke-width="1.1" fill="none"/></svg>
<div class="t" style="left:2496px;top:1401px;font-size:11.5px;line-height:15px;color:#fff">00:10:32</div>
<div class="t" style="left:2483px;top:1417px;font-size:11.5px;line-height:15px;color:#fff">25.09.2025</div>
</body></html>
